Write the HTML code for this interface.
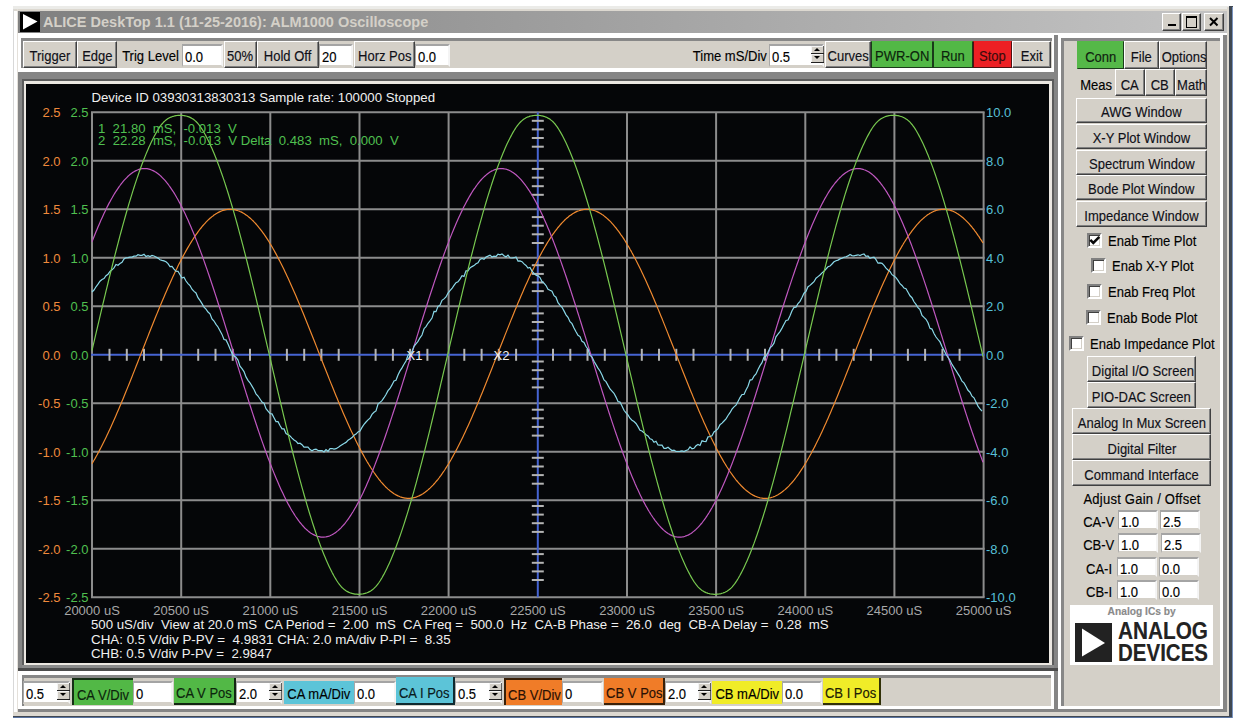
<!DOCTYPE html><html><head><meta charset="utf-8"><style>
html,body{margin:0;padding:0;}
body{width:1245px;height:727px;overflow:hidden;background:#fff;position:relative;font-family:"Liberation Sans",sans-serif;}
div{position:absolute;box-sizing:content-box;}
.rb{border:1px solid;border-color:#fff #404040 #404040 #fff;box-shadow:inset -1px -1px #808080;text-align:center;white-space:pre;overflow:hidden;}
.sl{border:1px solid;border-color:#808080 #fff #fff #808080;box-shadow:inset 1px 1px #404040;text-align:center;white-space:pre;overflow:hidden;}
.fl{white-space:pre;overflow:visible;}
.t{display:inline-block;transform:scaleX(0.93);-webkit-text-stroke:0.15px currentColor;}
.en{background:#fff;border:2px solid;border-color:#a4a4a4 #f4f4f4 #d4d0c8 #a8a8a8;border-left-width:1px;padding:0;text-indent:1px;white-space:pre;overflow:hidden;color:#000;}
.sp{background:#d4d0c8;border:0;box-shadow:inset 0 -1px #202020, inset -1px 0 #606060, inset 1px 1px #f4f4f4;}
.sp i{position:absolute;left:3px;width:0;height:0;border-left:3.5px solid transparent;border-right:3.5px solid transparent;}
.sp i.up{top:2px;border-bottom:3.5px solid #000;}
.sp i.dn{top:2px;border-top:3.5px solid #000;}
.cb{width:11px;height:11px;background:#fff;border:2px solid;border-color:#808080 #fff #fff #808080;box-shadow:inset 1px 1px #404040, inset -1px -1px #d4d0c8;}
</style></head><body>

<div style="left:13px;top:6px;width:1219.5px;height:712px;background:#fff;"></div>
<div style="left:13px;top:6px;width:1px;height:710px;background:#d8d8d8;"></div>
<div style="left:13px;top:6px;width:1216px;height:2.5px;background:#ebebe8;"></div>
<div style="left:14px;top:8.5px;width:1213px;height:2.5px;background:#dcd8d0;"></div>
<div style="left:17px;top:8.5px;width:1px;height:703.5px;background:#e4e0da;"></div>
<div style="left:1227px;top:7px;width:2px;height:709px;background:#dcd8d0;"></div>
<div style="left:13px;top:712px;width:1216px;height:3.5px;background:#dcd8d0;"></div>
<div style="left:1229px;top:6px;width:3.5px;height:712px;background:#404852;"></div>
<div style="left:13px;top:715.5px;width:1219.5px;height:2.5px;background:#404852;"></div>
<div style="left:13px;top:717px;width:1219.5px;height:1px;background:#5a74a0;"></div>
<div style="left:1232px;top:7px;width:1px;height:711px;background:#7a94c0;"></div>
<div style="left:18px;top:11px;width:1209px;height:22px;background:linear-gradient(to right,#808080,#c4c4c4);"></div>
<div style="left:20px;top:12px;width:20px;height:20px;background:#000;"></div>
<svg style="position:absolute;left:20px;top:12px" width="20" height="20" viewBox="0 0 20 20"><path d="M3 2 L17.5 9.5 L3 17.5 Z" fill="#fff"/></svg>
<div style="left:43px;top:12px;height:20px;line-height:20px;font-size:14.5px;font-weight:bold;color:#d4d0c8;white-space:pre">ALICE DeskTop 1.1 (11-25-2016): ALM1000 Oscilloscope</div>
<div class="rb" style="left:1162px;top:13px;width:17px;height:16px;line-height:20px;background:#d4d0c8;font-size:14px;color:#101018;"><span class="t" style=""></span></div>
<div class="rb" style="left:1182px;top:13px;width:17px;height:16px;line-height:20px;background:#d4d0c8;font-size:14px;color:#101018;"><span class="t" style=""></span></div>
<div class="rb" style="left:1204px;top:13px;width:18px;height:16px;line-height:20px;background:#d4d0c8;font-size:14px;color:#101018;"><span class="t" style=""></span></div>
<div style="left:1168px;top:24px;width:8px;height:2px;background:#000"></div>
<div style="left:1186px;top:16px;width:9px;height:8.5px;border:1px solid #000;border-top-width:2px"></div>
<svg style="position:absolute;left:1204px;top:13px" width="20" height="18" viewBox="0 0 20 18"><path d="M6 5 L13.5 12.5 M13.5 5 L6 12.5" stroke="#000" stroke-width="2" fill="none"/></svg>
<div style="left:21.4px;top:38px;width:1030.6px;height:30.400000000000006px;background:#878787;"></div>
<div style="left:24px;top:40.7px;width:1028px;height:27.700000000000003px;background:#d4d0c8;"></div>
<div style="left:1054.2px;top:34.5px;width:3.599999999999909px;height:677.5px;background:#858585;"></div>
<div class="rb" style="left:23px;top:41px;width:52px;height:25px;line-height:29px;background:#d4d0c8;font-size:14px;color:#101018;"><span class="t" style="">Trigger</span></div>
<div class="rb" style="left:77px;top:41px;width:38px;height:25px;line-height:29px;background:#d4d0c8;font-size:14px;color:#101018;"><span class="t" style="">Edge</span></div>
<div class="fl" style="left:119px;top:41px;width:62px;height:27px;line-height:31px;background:transparent;font-size:14px;color:#000;text-align:center;"><span class="t" style="transform-origin:50% 50%">Trig Level</span></div>
<div class="en" style="left:182px;top:44px;width:38px;height:19px;line-height:23px;font-size:14px;"><span class="t" style="transform-origin:0 50%">0.0</span></div>
<div class="rb" style="left:224px;top:41px;width:31px;height:25px;line-height:29px;background:#d4d0c8;font-size:14px;color:#101018;"><span class="t" style="">50%</span></div>
<div class="rb" style="left:257px;top:41px;width:60px;height:25px;line-height:29px;background:#d4d0c8;font-size:14px;color:#101018;"><span class="t" style="">Hold Off</span></div>
<div class="en" style="left:319px;top:44px;width:31px;height:19px;line-height:23px;font-size:14px;"><span class="t" style="transform-origin:0 50%">20</span></div>
<div class="rb" style="left:354px;top:41px;width:59px;height:25px;line-height:29px;background:#d4d0c8;font-size:14px;color:#101018;"><span class="t" style="">Horz Pos</span></div>
<div class="en" style="left:415px;top:44px;width:32px;height:19px;line-height:23px;font-size:14px;"><span class="t" style="transform-origin:0 50%">0.0</span></div>
<div class="fl" style="left:690px;top:41px;width:77px;height:27px;line-height:31px;background:transparent;font-size:14px;color:#000;text-align:center;"><span class="t" style="transform-origin:50% 50%">Time mS/Div</span></div>
<div class="en" style="left:769px;top:44px;width:52px;height:19px;line-height:23px;font-size:14px;"><span class="t" style="transform-origin:0 50%">0.5</span></div>
<div class="sp" style="left:811px;top:46px;width:13px;height:8px"><i class="up"></i></div>
<div class="sp" style="left:811px;top:54px;width:13px;height:8.5px"><i class="dn"></i></div>
<div class="rb" style="left:825px;top:41px;width:44px;height:25px;line-height:29px;background:#d4d0c8;font-size:14px;color:#101018;"><span class="t" style="">Curves</span></div>
<div class="rb" style="left:871px;top:41px;width:60px;height:25px;line-height:29px;background:#52b846;font-size:14px;color:#101018;border-color:#52b846 #1a3a1a #1a3a1a #1a3a1a;box-shadow:none;color:#0c240c"><span class="t" style="">PWR-ON</span></div>
<div class="rb" style="left:933px;top:41px;width:38px;height:25px;line-height:29px;background:#52b846;font-size:14px;color:#101018;border-color:#52b846 #1a3a1a #1a3a1a #1a3a1a;box-shadow:none;color:#0c240c"><span class="t" style="">Run</span></div>
<div class="rb" style="left:973px;top:41px;width:37px;height:25px;line-height:29px;background:#ec2024;font-size:14px;color:#101018;border-color:#ec2024 #501010 #501010 #501010;box-shadow:none;color:#3a0c0c"><span class="t" style="">Stop</span></div>
<div class="rb" style="left:1012px;top:41px;width:37px;height:25px;line-height:29px;background:#d4d0c8;font-size:14px;color:#101018;"><span class="t" style="">Exit</span></div>
<div style="left:17.5px;top:71.5px;width:1040.3px;height:599.5px;background:#858585;"></div>
<div style="left:21.5px;top:79px;width:1032.7px;height:588.5px;background:#5c5c5c;"></div>
<div style="left:24px;top:81px;width:1027.5px;height:584px;background:#ece8e2;"></div>
<div style="left:21.5px;top:665px;width:1032.7px;height:2.5px;background:#8c8c8c;"></div>
<div style="left:17.5px;top:667.5px;width:1040.3px;height:3.5px;background:#4c4c4c;"></div>
<div style="left:26px;top:84px;width:1022.8px;height:578.6px;background:#050608;"></div>
<div style="left:21.6px;top:675px;width:1029.4px;height:31px;background:#878787;"></div>
<div style="left:24px;top:677.5px;width:1027px;height:28.5px;background:#d4d0c8;"></div>
<div style="left:17.5px;top:709px;width:1040.3px;height:3px;background:#858585;"></div>
<div class="en" style="left:23px;top:681px;width:44px;height:19px;line-height:23px;font-size:14px;"><span class="t" style="transform-origin:0 50%">0.5</span></div>
<div class="sp" style="left:57px;top:683px;width:13px;height:8px"><i class="up"></i></div>
<div class="sp" style="left:57px;top:691px;width:13px;height:8.5px"><i class="dn"></i></div>
<div class="sl" style="left:72px;top:678px;width:59px;height:25px;line-height:29px;background:#52b846;font-size:14px;color:#000;border-width:2px 0 0 2px;border-color:#163016 #52b846 #52b846 #163016;box-shadow:none;width:59px;height:25px;line-height:31px;color:#0c240c"><span class="t">CA V/Div</span></div>
<div class="en" style="left:133px;top:681px;width:37px;height:19px;line-height:23px;font-size:14px;"><span class="t" style="transform-origin:0 50%">0</span></div>
<div class="rb" style="left:174px;top:678px;width:60px;height:25px;line-height:29px;background:#52b846;font-size:14px;color:#101018;border-width:0 2px 2px 0;border-color:#52b846 #122612 #122612 #52b846;box-shadow:none;width:60px;height:25px;line-height:31px;color:#0c240c"><span class="t" style="">CA V Pos</span></div>
<div class="en" style="left:236px;top:681px;width:43px;height:19px;line-height:23px;font-size:14px;"><span class="t" style="transform-origin:0 50%">2.0</span></div>
<div class="sp" style="left:269px;top:683px;width:13px;height:8px"><i class="up"></i></div>
<div class="sp" style="left:269px;top:691px;width:13px;height:8.5px"><i class="dn"></i></div>
<div class="fl" style="left:284px;top:681px;width:70px;height:23px;line-height:27px;background:#5cc4d8;font-size:14px;color:#000;text-align:center;"><span class="t" style="transform-origin:50% 50%">CA mA/Div</span></div>
<div class="en" style="left:354px;top:681px;width:39px;height:19px;line-height:23px;font-size:14px;"><span class="t" style="transform-origin:0 50%">0.0</span></div>
<div class="rb" style="left:396px;top:677px;width:57px;height:26px;line-height:30px;background:#5cc4d8;font-size:14px;color:#101018;border-width:0 2px 2px 0;border-color:#5cc4d8 #102a30 #102a30 #5cc4d8;box-shadow:none;width:57px;height:26px;line-height:32px;color:#0a1a20"><span class="t" style="">CA I Pos</span></div>
<div class="en" style="left:455px;top:681px;width:44px;height:19px;line-height:23px;font-size:14px;"><span class="t" style="transform-origin:0 50%">0.5</span></div>
<div class="sp" style="left:489px;top:683px;width:13px;height:8px"><i class="up"></i></div>
<div class="sp" style="left:489px;top:691px;width:13px;height:8.5px"><i class="dn"></i></div>
<div class="sl" style="left:504px;top:678px;width:56px;height:25px;line-height:29px;background:#f07c28;font-size:14px;color:#000;border-width:2px 0 0 2px;border-color:#3a2008 #f07c28 #f07c28 #3a2008;box-shadow:none;width:56px;height:25px;line-height:31px;color:#2a1004"><span class="t">CB V/Div</span></div>
<div class="en" style="left:562px;top:681px;width:38px;height:19px;line-height:23px;font-size:14px;"><span class="t" style="transform-origin:0 50%">0</span></div>
<div class="rb" style="left:604px;top:678px;width:59px;height:25px;line-height:29px;background:#f07c28;font-size:14px;color:#101018;border-width:0 2px 2px 0;border-color:#f07c28 #3a2008 #3a2008 #f07c28;box-shadow:none;width:59px;height:25px;line-height:31px;color:#2a1004"><span class="t" style="">CB V Pos</span></div>
<div class="en" style="left:665px;top:681px;width:43px;height:19px;line-height:23px;font-size:14px;"><span class="t" style="transform-origin:0 50%">2.0</span></div>
<div class="sp" style="left:698px;top:683px;width:13px;height:8px"><i class="up"></i></div>
<div class="sp" style="left:698px;top:691px;width:13px;height:8.5px"><i class="dn"></i></div>
<div class="fl" style="left:712px;top:681px;width:70px;height:23px;line-height:27px;background:#f0ec28;font-size:14px;color:#000;text-align:center;"><span class="t" style="transform-origin:50% 50%">CB mA/Div</span></div>
<div class="en" style="left:782px;top:681px;width:37px;height:19px;line-height:23px;font-size:14px;"><span class="t" style="transform-origin:0 50%">0.0</span></div>
<div class="rb" style="left:823px;top:678px;width:56px;height:25px;line-height:29px;background:#f0ec28;font-size:14px;color:#101018;border-width:0 2px 2px 0;border-color:#f0ec28 #303008 #303008 #f0ec28;box-shadow:none;width:56px;height:25px;line-height:31px;color:#202004"><span class="t" style="">CB I Pos</span></div>
<div style="left:1061.3px;top:38px;width:158.60000000000014px;height:667.5px;background:#878787;"></div>
<div style="left:1063.7px;top:40.5px;width:156.20000000000005px;height:665.0px;background:#d4d0c8;"></div>
<div style="left:1223px;top:34.5px;width:4px;height:677.5px;background:#858585;"></div>
<div style="left:1057.8px;top:709px;width:169.20000000000005px;height:3px;background:#858585;"></div>
<div class="rb" style="left:1077px;top:41px;width:45px;height:26px;line-height:30px;background:#55b848;font-size:14px;color:#101018;border-color:#55b848 #1c3c1c #1c3c1c #55b848;box-shadow:none;color:#102010"><span class="t" style="">Conn</span></div>
<div class="rb" style="left:1124px;top:41px;width:33px;height:26px;line-height:30px;background:#d4d0c8;font-size:14px;color:#101018;"><span class="t" style="">File</span></div>
<div class="rb" style="left:1159px;top:41px;width:46px;height:26px;line-height:30px;background:#d4d0c8;font-size:14px;color:#101018;"><span class="t" style="">Options</span></div>
<div class="fl" style="left:1078px;top:70px;width:36px;height:27px;line-height:31px;background:transparent;font-size:14px;color:#000;text-align:center;"><span class="t" style="transform-origin:50% 50%">Meas</span></div>
<div class="rb" style="left:1115px;top:69px;width:28px;height:25px;line-height:29px;background:#d4d0c8;font-size:14px;color:#101018;"><span class="t" style="position:relative;top:1px">CA</span></div>
<div class="rb" style="left:1145px;top:69px;width:28px;height:25px;line-height:29px;background:#d4d0c8;font-size:14px;color:#101018;"><span class="t" style="position:relative;top:1px">CB</span></div>
<div class="rb" style="left:1175px;top:69px;width:30px;height:25px;line-height:29px;background:#d4d0c8;font-size:14px;color:#101018;"><span class="t" style="position:relative;top:1px">Math</span></div>
<div class="rb" style="left:1076px;top:98px;width:129px;height:23px;line-height:27px;background:#d4d0c8;font-size:14px;color:#101018;"><span class="t" style="">AWG Window</span></div>
<div class="rb" style="left:1076px;top:124px;width:129px;height:23px;line-height:27px;background:#d4d0c8;font-size:14px;color:#101018;"><span class="t" style="">X-Y Plot Window</span></div>
<div class="rb" style="left:1076px;top:150px;width:129px;height:23px;line-height:27px;background:#d4d0c8;font-size:14px;color:#101018;"><span class="t" style="">Spectrum Window</span></div>
<div class="rb" style="left:1076px;top:175px;width:129px;height:23px;line-height:27px;background:#d4d0c8;font-size:14px;color:#101018;"><span class="t" style="">Bode Plot Window</span></div>
<div class="rb" style="left:1076px;top:201px;width:129px;height:24px;line-height:28px;background:#d4d0c8;font-size:14px;color:#101018;"><span class="t" style="">Impedance Window</span></div>
<div class="cb" style="left:1087px;top:233px"></div>
<svg style="position:absolute;left:1087px;top:233px" width="16" height="16" viewBox="0 0 16 16"><path d="M3.3 6.8 L6.3 9.8 L12.3 3.8" stroke="#080808" stroke-width="2.6" fill="none"/></svg>
<div class="fl" style="left:1108px;top:230px;height:20px;line-height:22px;font-size:14px;color:#000;white-space:pre"><span class="t" style="transform-origin:0 50%">Enab Time Plot</span></div>
<div class="cb" style="left:1091px;top:258px"></div>
<div class="fl" style="left:1112px;top:255px;height:20px;line-height:22px;font-size:14px;color:#000;white-space:pre"><span class="t" style="transform-origin:0 50%">Enab X-Y Plot</span></div>
<div class="cb" style="left:1087px;top:284px"></div>
<div class="fl" style="left:1108px;top:281px;height:20px;line-height:22px;font-size:14px;color:#000;white-space:pre"><span class="t" style="transform-origin:0 50%">Enab Freq Plot</span></div>
<div class="cb" style="left:1086px;top:310px"></div>
<div class="fl" style="left:1107px;top:307px;height:20px;line-height:22px;font-size:14px;color:#000;white-space:pre"><span class="t" style="transform-origin:0 50%">Enab Bode Plot</span></div>
<div class="cb" style="left:1069px;top:336px"></div>
<div class="fl" style="left:1090px;top:333px;height:20px;line-height:22px;font-size:14px;color:#000;white-space:pre"><span class="t" style="transform-origin:0 50%">Enab Impedance Plot</span></div>
<div class="rb" style="left:1087px;top:356px;width:107px;height:24px;line-height:28px;background:#d4d0c8;font-size:14px;color:#101018;"><span class="t" style="">Digital I/O Screen</span></div>
<div class="rb" style="left:1087px;top:382px;width:107px;height:24px;line-height:28px;background:#d4d0c8;font-size:14px;color:#101018;"><span class="t" style="">PIO-DAC Screen</span></div>
<div class="rb" style="left:1072px;top:408px;width:137px;height:24px;line-height:28px;background:#d4d0c8;font-size:14px;color:#101018;"><span class="t" style="">Analog In Mux Screen</span></div>
<div class="rb" style="left:1072px;top:434px;width:137px;height:24px;line-height:28px;background:#d4d0c8;font-size:14px;color:#101018;"><span class="t" style="">Digital Filter</span></div>
<div class="rb" style="left:1072px;top:460px;width:137px;height:24px;line-height:28px;background:#d4d0c8;font-size:14px;color:#101018;"><span class="t" style="">Command Interface</span></div>
<div class="fl" style="left:1064px;top:487px;width:156px;height:21px;line-height:25px;background:transparent;font-size:14px;color:#000;text-align:center;letter-spacing:0.25px"><span class="t" style="transform-origin:50% 50%">Adjust Gain / Offset</span></div>
<div class="fl" style="left:1080px;top:510px;width:37px;height:20px;line-height:24px;background:transparent;font-size:14px;color:#000;text-align:center;"><span class="t" style="transform-origin:50% 50%">CA-V</span></div>
<div class="en" style="left:1118px;top:510px;width:37px;height:16px;line-height:20px;font-size:14px;"><span class="t" style="transform-origin:0 50%">1.0</span></div>
<div class="en" style="left:1160px;top:510px;width:37px;height:16px;line-height:20px;font-size:14px;"><span class="t" style="transform-origin:0 50%">2.5</span></div>
<div class="fl" style="left:1080px;top:533px;width:37px;height:20px;line-height:24px;background:transparent;font-size:14px;color:#000;text-align:center;"><span class="t" style="transform-origin:50% 50%">CB-V</span></div>
<div class="en" style="left:1118px;top:533px;width:37px;height:16px;line-height:20px;font-size:14px;"><span class="t" style="transform-origin:0 50%">1.0</span></div>
<div class="en" style="left:1161px;top:533px;width:37px;height:16px;line-height:20px;font-size:14px;"><span class="t" style="transform-origin:0 50%">2.5</span></div>
<div class="fl" style="left:1080px;top:557px;width:37px;height:20px;line-height:24px;background:transparent;font-size:14px;color:#000;text-align:center;"><span class="t" style="transform-origin:50% 50%">CA-I</span></div>
<div class="en" style="left:1117px;top:557px;width:37px;height:16px;line-height:20px;font-size:14px;"><span class="t" style="transform-origin:0 50%">1.0</span></div>
<div class="en" style="left:1159px;top:557px;width:37px;height:16px;line-height:20px;font-size:14px;"><span class="t" style="transform-origin:0 50%">0.0</span></div>
<div class="fl" style="left:1080px;top:580px;width:37px;height:20px;line-height:24px;background:transparent;font-size:14px;color:#000;text-align:center;"><span class="t" style="transform-origin:50% 50%">CB-I</span></div>
<div class="en" style="left:1117px;top:580px;width:37px;height:16px;line-height:20px;font-size:14px;"><span class="t" style="transform-origin:0 50%">1.0</span></div>
<div class="en" style="left:1159px;top:580px;width:37px;height:16px;line-height:20px;font-size:14px;"><span class="t" style="transform-origin:0 50%">0.0</span></div>
<div style="left:1070px;top:605px;width:143px;height:60px;background:#fff;"></div>
<div style="left:1070px;top:604px;width:143px;height:14px;line-height:14px;font-size:11px;font-weight:bold;color:#8a8a8a;text-align:center"><span class="t" style="transform:scaleX(0.93)">Analog ICs by</span></div>
<div style="left:1075px;top:623px;width:37px;height:39px;background:#222;"></div>
<svg style="position:absolute;left:1075px;top:623px" width="37" height="39" viewBox="0 0 37 39"><path d="M7 5.5 L30 20 L7 33.5 Z" fill="#fff"/></svg>
<div style="left:1118px;top:620px;width:96px;height:22px;line-height:22px;font-size:24px;font-weight:bold;color:#222;white-space:pre"><span class="t" style="transform:scaleX(0.865);transform-origin:0 50%">ANALOG</span></div>
<div style="left:1118px;top:642px;width:96px;height:22px;line-height:22px;font-size:24px;font-weight:bold;color:#222;white-space:pre"><span class="t" style="transform:scaleX(0.854);transform-origin:0 50%">DEVICES</span></div>
<svg style="position:absolute;left:0;top:0" width="1245" height="727" viewBox="0 0 1245 727">
<line x1="92.0" y1="112.3" x2="92.0" y2="597.3" stroke="#8c8c8c" stroke-width="2"/>
<line x1="181.2" y1="112.3" x2="181.2" y2="597.3" stroke="#8c8c8c" stroke-width="2"/>
<line x1="270.3" y1="112.3" x2="270.3" y2="597.3" stroke="#8c8c8c" stroke-width="2"/>
<line x1="359.5" y1="112.3" x2="359.5" y2="597.3" stroke="#8c8c8c" stroke-width="2"/>
<line x1="448.6" y1="112.3" x2="448.6" y2="597.3" stroke="#8c8c8c" stroke-width="2"/>
<line x1="627.0" y1="112.3" x2="627.0" y2="597.3" stroke="#8c8c8c" stroke-width="2"/>
<line x1="716.1" y1="112.3" x2="716.1" y2="597.3" stroke="#8c8c8c" stroke-width="2"/>
<line x1="805.3" y1="112.3" x2="805.3" y2="597.3" stroke="#8c8c8c" stroke-width="2"/>
<line x1="894.4" y1="112.3" x2="894.4" y2="597.3" stroke="#8c8c8c" stroke-width="2"/>
<line x1="983.6" y1="112.3" x2="983.6" y2="597.3" stroke="#8c8c8c" stroke-width="2"/>
<line x1="91.0" y1="112.3" x2="984.6" y2="112.3" stroke="#8c8c8c" stroke-width="2"/>
<line x1="91.0" y1="160.8" x2="984.6" y2="160.8" stroke="#8c8c8c" stroke-width="2"/>
<line x1="91.0" y1="209.3" x2="984.6" y2="209.3" stroke="#8c8c8c" stroke-width="2"/>
<line x1="91.0" y1="257.8" x2="984.6" y2="257.8" stroke="#8c8c8c" stroke-width="2"/>
<line x1="91.0" y1="306.3" x2="984.6" y2="306.3" stroke="#8c8c8c" stroke-width="2"/>
<line x1="91.0" y1="403.3" x2="984.6" y2="403.3" stroke="#8c8c8c" stroke-width="2"/>
<line x1="91.0" y1="451.8" x2="984.6" y2="451.8" stroke="#8c8c8c" stroke-width="2"/>
<line x1="91.0" y1="500.3" x2="984.6" y2="500.3" stroke="#8c8c8c" stroke-width="2"/>
<line x1="91.0" y1="548.8" x2="984.6" y2="548.8" stroke="#8c8c8c" stroke-width="2"/>
<line x1="91.0" y1="597.3" x2="984.6" y2="597.3" stroke="#8c8c8c" stroke-width="2"/>
<line x1="91.0" y1="354.8" x2="984.6" y2="354.8" stroke="#4664d2" stroke-width="2"/>
<line x1="537.8" y1="112.3" x2="537.8" y2="597.3" stroke="#4664d2" stroke-width="2"/>
<line x1="109.5" y1="348.8" x2="109.5" y2="360.8" stroke="#b4b4b4" stroke-width="2"/>
<line x1="126.8" y1="348.8" x2="126.8" y2="360.8" stroke="#b4b4b4" stroke-width="2"/>
<line x1="144.0" y1="348.8" x2="144.0" y2="360.8" stroke="#b4b4b4" stroke-width="2"/>
<line x1="161.2" y1="348.8" x2="161.2" y2="360.8" stroke="#b4b4b4" stroke-width="2"/>
<line x1="198.2" y1="348.8" x2="198.2" y2="360.8" stroke="#b4b4b4" stroke-width="2"/>
<line x1="215.5" y1="348.8" x2="215.5" y2="360.8" stroke="#b4b4b4" stroke-width="2"/>
<line x1="232.7" y1="348.8" x2="232.7" y2="360.8" stroke="#b4b4b4" stroke-width="2"/>
<line x1="250.0" y1="348.8" x2="250.0" y2="360.8" stroke="#b4b4b4" stroke-width="2"/>
<line x1="286.9" y1="348.8" x2="286.9" y2="360.8" stroke="#b4b4b4" stroke-width="2"/>
<line x1="304.2" y1="348.8" x2="304.2" y2="360.8" stroke="#b4b4b4" stroke-width="2"/>
<line x1="321.4" y1="348.8" x2="321.4" y2="360.8" stroke="#b4b4b4" stroke-width="2"/>
<line x1="338.7" y1="348.8" x2="338.7" y2="360.8" stroke="#b4b4b4" stroke-width="2"/>
<line x1="375.6" y1="348.8" x2="375.6" y2="360.8" stroke="#b4b4b4" stroke-width="2"/>
<line x1="392.9" y1="348.8" x2="392.9" y2="360.8" stroke="#b4b4b4" stroke-width="2"/>
<line x1="410.1" y1="348.8" x2="410.1" y2="360.8" stroke="#b4b4b4" stroke-width="2"/>
<line x1="427.4" y1="348.8" x2="427.4" y2="360.8" stroke="#b4b4b4" stroke-width="2"/>
<line x1="464.3" y1="348.8" x2="464.3" y2="360.8" stroke="#b4b4b4" stroke-width="2"/>
<line x1="481.6" y1="348.8" x2="481.6" y2="360.8" stroke="#b4b4b4" stroke-width="2"/>
<line x1="498.8" y1="348.8" x2="498.8" y2="360.8" stroke="#b4b4b4" stroke-width="2"/>
<line x1="516.1" y1="348.8" x2="516.1" y2="360.8" stroke="#b4b4b4" stroke-width="2"/>
<line x1="553.0" y1="348.8" x2="553.0" y2="360.8" stroke="#b4b4b4" stroke-width="2"/>
<line x1="570.3" y1="348.8" x2="570.3" y2="360.8" stroke="#b4b4b4" stroke-width="2"/>
<line x1="587.5" y1="348.8" x2="587.5" y2="360.8" stroke="#b4b4b4" stroke-width="2"/>
<line x1="604.8" y1="348.8" x2="604.8" y2="360.8" stroke="#b4b4b4" stroke-width="2"/>
<line x1="641.8" y1="348.8" x2="641.8" y2="360.8" stroke="#b4b4b4" stroke-width="2"/>
<line x1="659.0" y1="348.8" x2="659.0" y2="360.8" stroke="#b4b4b4" stroke-width="2"/>
<line x1="676.3" y1="348.8" x2="676.3" y2="360.8" stroke="#b4b4b4" stroke-width="2"/>
<line x1="693.5" y1="348.8" x2="693.5" y2="360.8" stroke="#b4b4b4" stroke-width="2"/>
<line x1="730.5" y1="348.8" x2="730.5" y2="360.8" stroke="#b4b4b4" stroke-width="2"/>
<line x1="747.7" y1="348.8" x2="747.7" y2="360.8" stroke="#b4b4b4" stroke-width="2"/>
<line x1="765.0" y1="348.8" x2="765.0" y2="360.8" stroke="#b4b4b4" stroke-width="2"/>
<line x1="782.2" y1="348.8" x2="782.2" y2="360.8" stroke="#b4b4b4" stroke-width="2"/>
<line x1="819.2" y1="348.8" x2="819.2" y2="360.8" stroke="#b4b4b4" stroke-width="2"/>
<line x1="836.4" y1="348.8" x2="836.4" y2="360.8" stroke="#b4b4b4" stroke-width="2"/>
<line x1="853.7" y1="348.8" x2="853.7" y2="360.8" stroke="#b4b4b4" stroke-width="2"/>
<line x1="870.9" y1="348.8" x2="870.9" y2="360.8" stroke="#b4b4b4" stroke-width="2"/>
<line x1="907.9" y1="348.8" x2="907.9" y2="360.8" stroke="#b4b4b4" stroke-width="2"/>
<line x1="925.1" y1="348.8" x2="925.1" y2="360.8" stroke="#b4b4b4" stroke-width="2"/>
<line x1="942.4" y1="348.8" x2="942.4" y2="360.8" stroke="#b4b4b4" stroke-width="2"/>
<line x1="959.6" y1="348.8" x2="959.6" y2="360.8" stroke="#b4b4b4" stroke-width="2"/>
<line x1="531.8" y1="120.8" x2="543.8" y2="120.8" stroke="#b4b4b4" stroke-width="2"/>
<line x1="531.8" y1="129.4" x2="543.8" y2="129.4" stroke="#b4b4b4" stroke-width="2"/>
<line x1="531.8" y1="138.0" x2="543.8" y2="138.0" stroke="#b4b4b4" stroke-width="2"/>
<line x1="531.8" y1="146.7" x2="543.8" y2="146.7" stroke="#b4b4b4" stroke-width="2"/>
<line x1="531.8" y1="168.9" x2="543.8" y2="168.9" stroke="#b4b4b4" stroke-width="2"/>
<line x1="531.8" y1="177.6" x2="543.8" y2="177.6" stroke="#b4b4b4" stroke-width="2"/>
<line x1="531.8" y1="186.2" x2="543.8" y2="186.2" stroke="#b4b4b4" stroke-width="2"/>
<line x1="531.8" y1="194.8" x2="543.8" y2="194.8" stroke="#b4b4b4" stroke-width="2"/>
<line x1="531.8" y1="217.1" x2="543.8" y2="217.1" stroke="#b4b4b4" stroke-width="2"/>
<line x1="531.8" y1="225.7" x2="543.8" y2="225.7" stroke="#b4b4b4" stroke-width="2"/>
<line x1="531.8" y1="234.3" x2="543.8" y2="234.3" stroke="#b4b4b4" stroke-width="2"/>
<line x1="531.8" y1="243.0" x2="543.8" y2="243.0" stroke="#b4b4b4" stroke-width="2"/>
<line x1="531.8" y1="265.2" x2="543.8" y2="265.2" stroke="#b4b4b4" stroke-width="2"/>
<line x1="531.8" y1="273.9" x2="543.8" y2="273.9" stroke="#b4b4b4" stroke-width="2"/>
<line x1="531.8" y1="282.5" x2="543.8" y2="282.5" stroke="#b4b4b4" stroke-width="2"/>
<line x1="531.8" y1="291.1" x2="543.8" y2="291.1" stroke="#b4b4b4" stroke-width="2"/>
<line x1="531.8" y1="313.4" x2="543.8" y2="313.4" stroke="#b4b4b4" stroke-width="2"/>
<line x1="531.8" y1="322.0" x2="543.8" y2="322.0" stroke="#b4b4b4" stroke-width="2"/>
<line x1="531.8" y1="330.6" x2="543.8" y2="330.6" stroke="#b4b4b4" stroke-width="2"/>
<line x1="531.8" y1="339.3" x2="543.8" y2="339.3" stroke="#b4b4b4" stroke-width="2"/>
<line x1="531.8" y1="361.5" x2="543.8" y2="361.5" stroke="#b4b4b4" stroke-width="2"/>
<line x1="531.8" y1="370.2" x2="543.8" y2="370.2" stroke="#b4b4b4" stroke-width="2"/>
<line x1="531.8" y1="378.8" x2="543.8" y2="378.8" stroke="#b4b4b4" stroke-width="2"/>
<line x1="531.8" y1="387.4" x2="543.8" y2="387.4" stroke="#b4b4b4" stroke-width="2"/>
<line x1="531.8" y1="409.7" x2="543.8" y2="409.7" stroke="#b4b4b4" stroke-width="2"/>
<line x1="531.8" y1="418.3" x2="543.8" y2="418.3" stroke="#b4b4b4" stroke-width="2"/>
<line x1="531.8" y1="426.9" x2="543.8" y2="426.9" stroke="#b4b4b4" stroke-width="2"/>
<line x1="531.8" y1="435.6" x2="543.8" y2="435.6" stroke="#b4b4b4" stroke-width="2"/>
<line x1="531.8" y1="457.8" x2="543.8" y2="457.8" stroke="#b4b4b4" stroke-width="2"/>
<line x1="531.8" y1="466.5" x2="543.8" y2="466.5" stroke="#b4b4b4" stroke-width="2"/>
<line x1="531.8" y1="475.1" x2="543.8" y2="475.1" stroke="#b4b4b4" stroke-width="2"/>
<line x1="531.8" y1="483.7" x2="543.8" y2="483.7" stroke="#b4b4b4" stroke-width="2"/>
<line x1="531.8" y1="506.0" x2="543.8" y2="506.0" stroke="#b4b4b4" stroke-width="2"/>
<line x1="531.8" y1="514.6" x2="543.8" y2="514.6" stroke="#b4b4b4" stroke-width="2"/>
<line x1="531.8" y1="523.2" x2="543.8" y2="523.2" stroke="#b4b4b4" stroke-width="2"/>
<line x1="531.8" y1="531.9" x2="543.8" y2="531.9" stroke="#b4b4b4" stroke-width="2"/>
<line x1="531.8" y1="554.1" x2="543.8" y2="554.1" stroke="#b4b4b4" stroke-width="2"/>
<line x1="531.8" y1="562.8" x2="543.8" y2="562.8" stroke="#b4b4b4" stroke-width="2"/>
<line x1="531.8" y1="571.4" x2="543.8" y2="571.4" stroke="#b4b4b4" stroke-width="2"/>
<line x1="531.8" y1="580.0" x2="543.8" y2="580.0" stroke="#b4b4b4" stroke-width="2"/>
<polyline points="92.0,463.7 93.0,462.0 94.0,460.3 95.0,458.6 96.0,456.8 97.0,455.0 98.0,453.1 99.0,451.3 100.0,449.4 101.0,447.5 102.0,445.5 103.0,443.5 104.0,441.5 105.0,439.5 106.0,437.4 107.0,435.3 108.0,433.2 109.0,431.1 110.0,428.9 111.0,426.7 112.0,424.5 113.0,422.3 114.0,420.0 115.0,417.7 116.0,415.4 117.0,413.1 118.0,410.8 119.0,408.5 120.0,406.1 121.0,403.7 122.0,401.3 123.0,398.9 124.0,396.5 125.0,394.0 126.0,391.6 127.0,389.1 128.0,386.6 129.0,384.2 130.0,381.7 131.0,379.2 132.0,376.7 133.0,374.1 134.0,371.6 135.0,369.1 136.0,366.5 137.0,364.0 138.0,361.5 139.0,358.9 140.0,356.4 141.0,353.8 142.0,351.3 143.0,348.7 144.0,346.2 145.0,343.7 146.0,341.1 147.0,338.6 148.0,336.1 149.0,333.5 150.0,331.0 151.0,328.5 152.0,326.0 153.0,323.5 154.0,321.0 155.0,318.5 156.0,316.1 157.0,313.6 158.0,311.2 159.0,308.8 160.0,306.3 161.0,304.0 162.0,301.6 163.0,299.2 164.0,296.9 165.0,294.5 166.0,292.2 167.0,289.9 168.0,287.6 169.0,285.4 170.0,283.2 171.0,280.9 172.0,278.8 173.0,276.6 174.0,274.5 175.0,272.3 176.0,270.3 177.0,268.2 178.0,266.1 179.0,264.1 180.0,262.2 181.0,260.2 182.0,258.3 183.0,256.4 184.0,254.5 185.0,252.7 186.0,250.9 187.0,249.1 188.0,247.4 189.0,245.7 190.0,244.0 191.0,242.4 192.0,240.8 193.0,239.2 194.0,237.6 195.0,236.2 196.0,234.7 197.0,233.3 198.0,231.9 199.0,230.5 200.0,229.2 201.0,228.0 202.0,226.7 203.0,225.5 204.0,224.4 205.0,223.3 206.0,222.2 207.0,221.2 208.0,220.2 209.0,219.2 210.0,218.3 211.0,217.5 212.0,216.6 213.0,215.9 214.0,215.1 215.0,214.4 216.0,213.8 217.0,213.2 218.0,212.6 219.0,212.1 220.0,211.6 221.0,211.2 222.0,210.8 223.0,210.4 224.0,210.2 225.0,209.9 226.0,209.7 227.0,209.5 228.0,209.4 229.0,209.3 230.0,209.3 231.0,209.3 232.0,209.4 233.0,209.5 234.0,209.6 235.0,209.8 236.0,210.1 237.0,210.3 238.0,210.7 239.0,211.0 240.0,211.5 241.0,211.9 242.0,212.4 243.0,213.0 244.0,213.6 245.0,214.2 246.0,214.9 247.0,215.6 248.0,216.4 249.0,217.2 250.0,218.0 251.0,218.9 252.0,219.9 253.0,220.8 254.0,221.9 255.0,222.9 256.0,224.0 257.0,225.2 258.0,226.3 259.0,227.6 260.0,228.8 261.0,230.1 262.0,231.4 263.0,232.8 264.0,234.2 265.0,235.7 266.0,237.2 267.0,238.7 268.0,240.2 269.0,241.8 270.0,243.5 271.0,245.1 272.0,246.8 273.0,248.5 274.0,250.3 275.0,252.1 276.0,253.9 277.0,255.8 278.0,257.7 279.0,259.6 280.0,261.5 281.0,263.5 282.0,265.5 283.0,267.5 284.0,269.6 285.0,271.7 286.0,273.8 287.0,275.9 288.0,278.1 289.0,280.2 290.0,282.4 291.0,284.7 292.0,286.9 293.0,289.2 294.0,291.5 295.0,293.8 296.0,296.1 297.0,298.5 298.0,300.8 299.0,303.2 300.0,305.6 301.0,308.0 302.0,310.4 303.0,312.8 304.0,315.3 305.0,317.8 306.0,320.2 307.0,322.7 308.0,325.2 309.0,327.7 310.0,330.2 311.0,332.7 312.0,335.2 313.0,337.8 314.0,340.3 315.0,342.8 316.0,345.4 317.0,347.9 318.0,350.5 319.0,353.0 320.0,355.6 321.0,358.1 322.0,360.7 323.0,363.2 324.0,365.7 325.0,368.3 326.0,370.8 327.0,373.3 328.0,375.8 329.0,378.4 330.0,380.9 331.0,383.4 332.0,385.8 333.0,388.3 334.0,390.8 335.0,393.2 336.0,395.7 337.0,398.1 338.0,400.5 339.0,402.9 340.0,405.3 341.0,407.7 342.0,410.1 343.0,412.4 344.0,414.7 345.0,417.0 346.0,419.3 347.0,421.6 348.0,423.8 349.0,426.0 350.0,428.2 351.0,430.4 352.0,432.5 353.0,434.6 354.0,436.7 355.0,438.8 356.0,440.9 357.0,442.9 358.0,444.9 359.0,446.8 360.0,448.8 361.0,450.7 362.0,452.6 363.0,454.4 364.0,456.2 365.0,458.0 366.0,459.7 367.0,461.5 368.0,463.1 369.0,464.8 370.0,466.4 371.0,468.0 372.0,469.5 373.0,471.0 374.0,472.5 375.0,473.9 376.0,475.3 377.0,476.7 378.0,478.0 379.0,479.3 380.0,480.5 381.0,481.8 382.0,482.9 383.0,484.0 384.0,485.1 385.0,486.2 386.0,487.2 387.0,488.1 388.0,489.1 389.0,489.9 390.0,490.8 391.0,491.6 392.0,492.3 393.0,493.0 394.0,493.7 395.0,494.3 396.0,494.9 397.0,495.4 398.0,495.9 399.0,496.3 400.0,496.8 401.0,497.1 402.0,497.4 403.0,497.7 404.0,497.9 405.0,498.1 406.0,498.2 407.0,498.3 408.0,498.4 409.0,498.4 410.0,498.3 411.0,498.2 412.0,498.1 413.0,497.9 414.0,497.7 415.0,497.4 416.0,497.1 417.0,496.7 418.0,496.3 419.0,495.9 420.0,495.4 421.0,494.9 422.0,494.3 423.0,493.7 424.0,493.0 425.0,492.3 426.0,491.5 427.0,490.7 428.0,489.9 429.0,489.0 430.0,488.1 431.0,487.1 432.0,486.1 433.0,485.1 434.0,484.0 435.0,482.9 436.0,481.7 437.0,480.5 438.0,479.3 439.0,478.0 440.0,476.6 441.0,475.3 442.0,473.9 443.0,472.4 444.0,471.0 445.0,469.5 446.0,467.9 447.0,466.3 448.0,464.7 449.0,463.1 450.0,461.4 451.0,459.7 452.0,457.9 453.0,456.1 454.0,454.3 455.0,452.5 456.0,450.6 457.0,448.7 458.0,446.8 459.0,444.8 460.0,442.8 461.0,440.8 462.0,438.7 463.0,436.7 464.0,434.6 465.0,432.4 466.0,430.3 467.0,428.1 468.0,425.9 469.0,423.7 470.0,421.5 471.0,419.2 472.0,416.9 473.0,414.6 474.0,412.3 475.0,410.0 476.0,407.6 477.0,405.2 478.0,402.8 479.0,400.4 480.0,398.0 481.0,395.6 482.0,393.2 483.0,390.7 484.0,388.2 485.0,385.7 486.0,383.3 487.0,380.8 488.0,378.3 489.0,375.7 490.0,373.2 491.0,370.7 492.0,368.2 493.0,365.6 494.0,363.1 495.0,360.5 496.0,358.0 497.0,355.5 498.0,352.9 499.0,350.4 500.0,347.8 501.0,345.3 502.0,342.7 503.0,340.2 504.0,337.7 505.0,335.1 506.0,332.6 507.0,330.1 508.0,327.6 509.0,325.1 510.0,322.6 511.0,320.1 512.0,317.7 513.0,315.2 514.0,312.7 515.0,310.3 516.0,307.9 517.0,305.5 518.0,303.1 519.0,300.7 520.0,298.4 521.0,296.0 522.0,293.7 523.0,291.4 524.0,289.1 525.0,286.8 526.0,284.6 527.0,282.4 528.0,280.2 529.0,278.0 530.0,275.8 531.0,273.7 532.0,271.6 533.0,269.5 534.0,267.5 535.0,265.4 536.0,263.4 537.0,261.4 538.0,259.5 539.0,257.6 540.0,255.7 541.0,253.9 542.0,252.0 543.0,250.2 544.0,248.5 545.0,246.8 546.0,245.1 547.0,243.4 548.0,241.8 549.0,240.2 550.0,238.6 551.0,237.1 552.0,235.6 553.0,234.2 554.0,232.8 555.0,231.4 556.0,230.1 557.0,228.8 558.0,227.5 559.0,226.3 560.0,225.1 561.0,224.0 562.0,222.9 563.0,221.8 564.0,220.8 565.0,219.8 566.0,218.9 567.0,218.0 568.0,217.2 569.0,216.3 570.0,215.6 571.0,214.9 572.0,214.2 573.0,213.6 574.0,213.0 575.0,212.4 576.0,211.9 577.0,211.4 578.0,211.0 579.0,210.7 580.0,210.3 581.0,210.1 582.0,209.8 583.0,209.6 584.0,209.5 585.0,209.4 586.0,209.3 587.0,209.3 588.0,209.3 589.0,209.4 590.0,209.5 591.0,209.7 592.0,209.9 593.0,210.2 594.0,210.5 595.0,210.8 596.0,211.2 597.0,211.6 598.0,212.1 599.0,212.6 600.0,213.2 601.0,213.8 602.0,214.5 603.0,215.1 604.0,215.9 605.0,216.7 606.0,217.5 607.0,218.4 608.0,219.3 609.0,220.2 610.0,221.2 611.0,222.2 612.0,223.3 613.0,224.4 614.0,225.6 615.0,226.8 616.0,228.0 617.0,229.3 618.0,230.6 619.0,231.9 620.0,233.3 621.0,234.8 622.0,236.2 623.0,237.7 624.0,239.2 625.0,240.8 626.0,242.4 627.0,244.1 628.0,245.7 629.0,247.4 630.0,249.2 631.0,250.9 632.0,252.8 633.0,254.6 634.0,256.5 635.0,258.4 636.0,260.3 637.0,262.2 638.0,264.2 639.0,266.2 640.0,268.3 641.0,270.3 642.0,272.4 643.0,274.5 644.0,276.7 645.0,278.8 646.0,281.0 647.0,283.2 648.0,285.5 649.0,287.7 650.0,290.0 651.0,292.3 652.0,294.6 653.0,296.9 654.0,299.3 655.0,301.7 656.0,304.0 657.0,306.4 658.0,308.9 659.0,311.3 660.0,313.7 661.0,316.2 662.0,318.6 663.0,321.1 664.0,323.6 665.0,326.1 666.0,328.6 667.0,331.1 668.0,333.6 669.0,336.2 670.0,338.7 671.0,341.2 672.0,343.8 673.0,346.3 674.0,348.8 675.0,351.4 676.0,353.9 677.0,356.5 678.0,359.0 679.0,361.6 680.0,364.1 681.0,366.6 682.0,369.2 683.0,371.7 684.0,374.2 685.0,376.8 686.0,379.3 687.0,381.8 688.0,384.3 689.0,386.7 690.0,389.2 691.0,391.7 692.0,394.1 693.0,396.6 694.0,399.0 695.0,401.4 696.0,403.8 697.0,406.2 698.0,408.6 699.0,410.9 700.0,413.2 701.0,415.5 702.0,417.8 703.0,420.1 704.0,422.4 705.0,424.6 706.0,426.8 707.0,429.0 708.0,431.1 709.0,433.3 710.0,435.4 711.0,437.5 712.0,439.6 713.0,441.6 714.0,443.6 715.0,445.6 716.0,447.5 717.0,449.5 718.0,451.4 719.0,453.2 720.0,455.1 721.0,456.9 722.0,458.6 723.0,460.4 724.0,462.1 725.0,463.7 726.0,465.4 727.0,467.0 728.0,468.5 729.0,470.1 730.0,471.6 731.0,473.0 732.0,474.4 733.0,475.8 734.0,477.2 735.0,478.5 736.0,479.8 737.0,481.0 738.0,482.2 739.0,483.3 740.0,484.4 741.0,485.5 742.0,486.5 743.0,487.5 744.0,488.5 745.0,489.4 746.0,490.2 747.0,491.1 748.0,491.8 749.0,492.6 750.0,493.3 751.0,493.9 752.0,494.5 753.0,495.1 754.0,495.6 755.0,496.1 756.0,496.5 757.0,496.9 758.0,497.2 759.0,497.5 760.0,497.8 761.0,498.0 762.0,498.1 763.0,498.3 764.0,498.3 765.0,498.4 766.0,498.3 767.0,498.3 768.0,498.2 769.0,498.0 770.0,497.8 771.0,497.6 772.0,497.3 773.0,497.0 774.0,496.6 775.0,496.2 776.0,495.7 777.0,495.2 778.0,494.7 779.0,494.1 780.0,493.4 781.0,492.7 782.0,492.0 783.0,491.2 784.0,490.4 785.0,489.6 786.0,488.7 787.0,487.8 788.0,486.8 789.0,485.8 790.0,484.7 791.0,483.6 792.0,482.5 793.0,481.3 794.0,480.1 795.0,478.8 796.0,477.5 797.0,476.2 798.0,474.8 799.0,473.4 800.0,471.9 801.0,470.4 802.0,468.9 803.0,467.4 804.0,465.8 805.0,464.1 806.0,462.5 807.0,460.8 808.0,459.0 809.0,457.3 810.0,455.5 811.0,453.7 812.0,451.8 813.0,449.9 814.0,448.0 815.0,446.1 816.0,444.1 817.0,442.1 818.0,440.0 819.0,438.0 820.0,435.9 821.0,433.8 822.0,431.7 823.0,429.5 824.0,427.3 825.0,425.1 826.0,422.9 827.0,420.6 828.0,418.4 829.0,416.1 830.0,413.8 831.0,411.5 832.0,409.1 833.0,406.8 834.0,404.4 835.0,402.0 836.0,399.6 837.0,397.2 838.0,394.7 839.0,392.3 840.0,389.8 841.0,387.3 842.0,384.9 843.0,382.4 844.0,379.9 845.0,377.4 846.0,374.8 847.0,372.3 848.0,369.8 849.0,367.3 850.0,364.7 851.0,362.2 852.0,359.6 853.0,357.1 854.0,354.5 855.0,352.0 856.0,349.5 857.0,346.9 858.0,344.4 859.0,341.8 860.0,339.3 861.0,336.8 862.0,334.2 863.0,331.7 864.0,329.2 865.0,326.7 866.0,324.2 867.0,321.7 868.0,319.2 869.0,316.8 870.0,314.3 871.0,311.9 872.0,309.4 873.0,307.0 874.0,304.6 875.0,302.2 876.0,299.9 877.0,297.5 878.0,295.2 879.0,292.9 880.0,290.6 881.0,288.3 882.0,286.0 883.0,283.8 884.0,281.6 885.0,279.4 886.0,277.2 887.0,275.1 888.0,272.9 889.0,270.8 890.0,268.8 891.0,266.7 892.0,264.7 893.0,262.7 894.0,260.7 895.0,258.8 896.0,256.9 897.0,255.0 898.0,253.2 899.0,251.4 900.0,249.6 901.0,247.9 902.0,246.1 903.0,244.5 904.0,242.8 905.0,241.2 906.0,239.6 907.0,238.1 908.0,236.6 909.0,235.1 910.0,233.7 911.0,232.3 912.0,230.9 913.0,229.6 914.0,228.3 915.0,227.1 916.0,225.9 917.0,224.7 918.0,223.6 919.0,222.5 920.0,221.4 921.0,220.4 922.0,219.5 923.0,218.6 924.0,217.7 925.0,216.9 926.0,216.1 927.0,215.3 928.0,214.6 929.0,214.0 930.0,213.3 931.0,212.8 932.0,212.2 933.0,211.7 934.0,211.3 935.0,210.9 936.0,210.5 937.0,210.2 938.0,210.0 939.0,209.7 940.0,209.6 941.0,209.4 942.0,209.3 943.0,209.3 944.0,209.3 945.0,209.4 946.0,209.4 947.0,209.6 948.0,209.8 949.0,210.0 950.0,210.3 951.0,210.6 952.0,210.9 953.0,211.3 954.0,211.8 955.0,212.3 956.0,212.8 957.0,213.4 958.0,214.0 959.0,214.7 960.0,215.4 961.0,216.2 962.0,217.0 963.0,217.8 964.0,218.7 965.0,219.6 966.0,220.6 967.0,221.6 968.0,222.6 969.0,223.7 970.0,224.8 971.0,226.0 972.0,227.2 973.0,228.5 974.0,229.7 975.0,231.1 976.0,232.4 977.0,233.8 978.0,235.3 979.0,236.7 980.0,238.3 981.0,239.8 982.0,241.4 983.0,243.0" fill="none" stroke="#f08a30" stroke-width="1.2"/>
<polyline points="92.0,241.9 93.0,239.4 94.0,236.8 95.0,234.3 96.0,231.8 97.0,229.4 98.0,227.0 99.0,224.7 100.0,222.4 101.0,220.1 102.0,217.9 103.0,215.7 104.0,213.5 105.0,211.4 106.0,209.4 107.0,207.3 108.0,205.4 109.0,203.4 110.0,201.6 111.0,199.7 112.0,198.0 113.0,196.2 114.0,194.5 115.0,192.9 116.0,191.3 117.0,189.8 118.0,188.3 119.0,186.8 120.0,185.5 121.0,184.1 122.0,182.9 123.0,181.6 124.0,180.4 125.0,179.3 126.0,178.3 127.0,177.3 128.0,176.3 129.0,175.4 130.0,174.5 131.0,173.7 132.0,173.0 133.0,172.3 134.0,171.7 135.0,171.1 136.0,170.6 137.0,170.2 138.0,169.8 139.0,169.4 140.0,169.1 141.0,168.9 142.0,168.7 143.0,168.6 144.0,168.6 145.0,168.6 146.0,168.6 147.0,168.7 148.0,168.9 149.0,169.1 150.0,169.4 151.0,169.8 152.0,170.2 153.0,170.6 154.0,171.1 155.0,171.7 156.0,172.3 157.0,173.0 158.0,173.7 159.0,174.5 160.0,175.4 161.0,176.3 162.0,177.3 163.0,178.3 164.0,179.3 165.0,180.4 166.0,181.6 167.0,182.9 168.0,184.1 169.0,185.5 170.0,186.8 171.0,188.3 172.0,189.8 173.0,191.3 174.0,192.9 175.0,194.5 176.0,196.2 177.0,198.0 178.0,199.7 179.0,201.6 180.0,203.4 181.0,205.4 182.0,207.3 183.0,209.4 184.0,211.4 185.0,213.5 186.0,215.7 187.0,217.9 188.0,220.1 189.0,222.4 190.0,224.7 191.0,227.0 192.0,229.4 193.0,231.8 194.0,234.3 195.0,236.8 196.0,239.4 197.0,241.9 198.0,244.5 199.0,247.2 200.0,249.9 201.0,252.6 202.0,255.3 203.0,258.1 204.0,260.9 205.0,263.7 206.0,266.6 207.0,269.4 208.0,272.4 209.0,275.3 210.0,278.2 211.0,281.2 212.0,284.2 213.0,287.2 214.0,290.3 215.0,293.4 216.0,296.4 217.0,299.5 218.0,302.7 219.0,305.8 220.0,308.9 221.0,312.1 222.0,315.3 223.0,318.5 224.0,321.6 225.0,324.9 226.0,328.1 227.0,331.3 228.0,334.5 229.0,337.7 230.0,341.0 231.0,344.2 232.0,347.5 233.0,350.7 234.0,354.0 235.0,357.2 236.0,360.5 237.0,363.7 238.0,366.9 239.0,370.2 240.0,373.4 241.0,376.6 242.0,379.8 243.0,383.0 244.0,386.2 245.0,389.4 246.0,392.6 247.0,395.8 248.0,398.9 249.0,402.1 250.0,405.2 251.0,408.3 252.0,411.4 253.0,414.4 254.0,417.5 255.0,420.5 256.0,423.5 257.0,426.5 258.0,429.5 259.0,432.4 260.0,435.3 261.0,438.2 262.0,441.1 263.0,443.9 264.0,446.7 265.0,449.5 266.0,452.3 267.0,455.0 268.0,457.7 269.0,460.3 270.0,463.0 271.0,465.5 272.0,468.1 273.0,470.6 274.0,473.1 275.0,475.5 276.0,477.9 277.0,480.3 278.0,482.6 279.0,484.9 280.0,487.2 281.0,489.4 282.0,491.5 283.0,493.6 284.0,495.7 285.0,497.7 286.0,499.7 287.0,501.7 288.0,503.6 289.0,505.4 290.0,507.2 291.0,509.0 292.0,510.7 293.0,512.3 294.0,513.9 295.0,515.5 296.0,517.0 297.0,518.4 298.0,519.8 299.0,521.2 300.0,522.5 301.0,523.7 302.0,524.9 303.0,526.0 304.0,527.1 305.0,528.2 306.0,529.1 307.0,530.0 308.0,530.9 309.0,531.7 310.0,532.5 311.0,533.2 312.0,533.8 313.0,534.4 314.0,534.9 315.0,535.4 316.0,535.8 317.0,536.2 318.0,536.5 319.0,536.7 320.0,536.9 321.0,537.1 322.0,537.1 323.0,537.2 324.0,537.1 325.0,537.0 326.0,536.9 327.0,536.7 328.0,536.4 329.0,536.1 330.0,535.7 331.0,535.2 332.0,534.8 333.0,534.2 334.0,533.6 335.0,532.9 336.0,532.2 337.0,531.4 338.0,530.6 339.0,529.7 340.0,528.8 341.0,527.8 342.0,526.7 343.0,525.6 344.0,524.5 345.0,523.3 346.0,522.0 347.0,520.7 348.0,519.3 349.0,517.9 350.0,516.4 351.0,514.9 352.0,513.3 353.0,511.7 354.0,510.0 355.0,508.3 356.0,506.6 357.0,504.7 358.0,502.9 359.0,501.0 360.0,499.0 361.0,497.0 362.0,495.0 363.0,492.9 364.0,490.7 365.0,488.6 366.0,486.4 367.0,484.1 368.0,481.8 369.0,479.5 370.0,477.1 371.0,474.7 372.0,472.2 373.0,469.7 374.0,467.2 375.0,464.6 376.0,462.0 377.0,459.4 378.0,456.7 379.0,454.0 380.0,451.3 381.0,448.5 382.0,445.7 383.0,442.9 384.0,440.1 385.0,437.2 386.0,434.3 387.0,431.4 388.0,428.4 389.0,425.5 390.0,422.5 391.0,419.4 392.0,416.4 393.0,413.3 394.0,410.3 395.0,407.2 396.0,404.1 397.0,400.9 398.0,397.8 399.0,394.6 400.0,391.5 401.0,388.3 402.0,385.1 403.0,381.9 404.0,378.7 405.0,375.5 406.0,372.2 407.0,369.0 408.0,365.8 409.0,362.5 410.0,359.3 411.0,356.0 412.0,352.8 413.0,349.5 414.0,346.3 415.0,343.1 416.0,339.8 417.0,336.6 418.0,333.4 419.0,330.1 420.0,326.9 421.0,323.7 422.0,320.5 423.0,317.3 424.0,314.1 425.0,311.0 426.0,307.8 427.0,304.7 428.0,301.5 429.0,298.4 430.0,295.3 431.0,292.3 432.0,289.2 433.0,286.2 434.0,283.1 435.0,280.1 436.0,277.2 437.0,274.2 438.0,271.3 439.0,268.4 440.0,265.5 441.0,262.7 442.0,259.9 443.0,257.1 444.0,254.3 445.0,251.6 446.0,248.9 447.0,246.2 448.0,243.6 449.0,241.0 450.0,238.4 451.0,235.9 452.0,233.4 453.0,231.0 454.0,228.5 455.0,226.2 456.0,223.8 457.0,221.5 458.0,219.3 459.0,217.1 460.0,214.9 461.0,212.8 462.0,210.7 463.0,208.6 464.0,206.6 465.0,204.7 466.0,202.8 467.0,200.9 468.0,199.1 469.0,197.3 470.0,195.6 471.0,193.9 472.0,192.3 473.0,190.7 474.0,189.2 475.0,187.8 476.0,186.3 477.0,185.0 478.0,183.7 479.0,182.4 480.0,181.2 481.0,180.0 482.0,178.9 483.0,177.9 484.0,176.9 485.0,176.0 486.0,175.1 487.0,174.2 488.0,173.5 489.0,172.8 490.0,172.1 491.0,171.5 492.0,170.9 493.0,170.5 494.0,170.0 495.0,169.6 496.0,169.3 497.0,169.1 498.0,168.8 499.0,168.7 500.0,168.6 501.0,168.6 502.0,168.6 503.0,168.7 504.0,168.8 505.0,169.0 506.0,169.2 507.0,169.5 508.0,169.9 509.0,170.3 510.0,170.8 511.0,171.3 512.0,171.9 513.0,172.6 514.0,173.3 515.0,174.0 516.0,174.8 517.0,175.7 518.0,176.6 519.0,177.6 520.0,178.6 521.0,179.7 522.0,180.9 523.0,182.1 524.0,183.3 525.0,184.6 526.0,186.0 527.0,187.4 528.0,188.8 529.0,190.3 530.0,191.9 531.0,193.5 532.0,195.1 533.0,196.8 534.0,198.6 535.0,200.4 536.0,202.2 537.0,204.1 538.0,206.1 539.0,208.1 540.0,210.1 541.0,212.2 542.0,214.3 543.0,216.4 544.0,218.7 545.0,220.9 546.0,223.2 547.0,225.5 548.0,227.9 549.0,230.3 550.0,232.7 551.0,235.2 552.0,237.7 553.0,240.3 554.0,242.9 555.0,245.5 556.0,248.1 557.0,250.8 558.0,253.6 559.0,256.3 560.0,259.1 561.0,261.9 562.0,264.7 563.0,267.6 564.0,270.5 565.0,273.4 566.0,276.3 567.0,279.3 568.0,282.3 569.0,285.3 570.0,288.3 571.0,291.4 572.0,294.5 573.0,297.6 574.0,300.7 575.0,303.8 576.0,306.9 577.0,310.1 578.0,313.2 579.0,316.4 580.0,319.6 581.0,322.8 582.0,326.0 583.0,329.2 584.0,332.4 585.0,335.7 586.0,338.9 587.0,342.2 588.0,345.4 589.0,348.6 590.0,351.9 591.0,355.1 592.0,358.4 593.0,361.6 594.0,364.9 595.0,368.1 596.0,371.3 597.0,374.6 598.0,377.8 599.0,381.0 600.0,384.2 601.0,387.4 602.0,390.6 603.0,393.8 604.0,396.9 605.0,400.1 606.0,403.2 607.0,406.3 608.0,409.4 609.0,412.5 610.0,415.5 611.0,418.6 612.0,421.6 613.0,424.6 614.0,427.6 615.0,430.6 616.0,433.5 617.0,436.4 618.0,439.3 619.0,442.1 620.0,445.0 621.0,447.8 622.0,450.5 623.0,453.3 624.0,456.0 625.0,458.6 626.0,461.3 627.0,463.9 628.0,466.5 629.0,469.0 630.0,471.5 631.0,474.0 632.0,476.4 633.0,478.8 634.0,481.1 635.0,483.5 636.0,485.7 637.0,488.0 638.0,490.1 639.0,492.3 640.0,494.4 641.0,496.4 642.0,498.5 643.0,500.4 644.0,502.4 645.0,504.2 646.0,506.1 647.0,507.8 648.0,509.6 649.0,511.3 650.0,512.9 651.0,514.5 652.0,516.0 653.0,517.5 654.0,518.9 655.0,520.3 656.0,521.6 657.0,522.9 658.0,524.1 659.0,525.3 660.0,526.4 661.0,527.5 662.0,528.5 663.0,529.5 664.0,530.4 665.0,531.2 666.0,532.0 667.0,532.7 668.0,533.4 669.0,534.0 670.0,534.6 671.0,535.1 672.0,535.6 673.0,536.0 674.0,536.3 675.0,536.6 676.0,536.8 677.0,537.0 678.0,537.1 679.0,537.2 680.0,537.2 681.0,537.1 682.0,537.0 683.0,536.8 684.0,536.6 685.0,536.3 686.0,535.9 687.0,535.5 688.0,535.1 689.0,534.6 690.0,534.0 691.0,533.4 692.0,532.7 693.0,531.9 694.0,531.1 695.0,530.3 696.0,529.4 697.0,528.4 698.0,527.4 699.0,526.3 700.0,525.2 701.0,524.0 702.0,522.8 703.0,521.5 704.0,520.2 705.0,518.8 706.0,517.4 707.0,515.9 708.0,514.3 709.0,512.8 710.0,511.1 711.0,509.4 712.0,507.7 713.0,505.9 714.0,504.1 715.0,502.2 716.0,500.3 717.0,498.3 718.0,496.3 719.0,494.2 720.0,492.1 721.0,490.0 722.0,487.8 723.0,485.5 724.0,483.3 725.0,481.0 726.0,478.6 727.0,476.2 728.0,473.8 729.0,471.3 730.0,468.8 731.0,466.3 732.0,463.7 733.0,461.1 734.0,458.4 735.0,455.8 736.0,453.0 737.0,450.3 738.0,447.5 739.0,444.7 740.0,441.9 741.0,439.0 742.0,436.2 743.0,433.3 744.0,430.3 745.0,427.4 746.0,424.4 747.0,421.4 748.0,418.3 749.0,415.3 750.0,412.2 751.0,409.2 752.0,406.1 753.0,402.9 754.0,399.8 755.0,396.7 756.0,393.5 757.0,390.3 758.0,387.1 759.0,383.9 760.0,380.7 761.0,377.5 762.0,374.3 763.0,371.1 764.0,367.8 765.0,364.6 766.0,361.4 767.0,358.1 768.0,354.9 769.0,351.6 770.0,348.4 771.0,345.1 772.0,341.9 773.0,338.7 774.0,335.4 775.0,332.2 776.0,329.0 777.0,325.7 778.0,322.5 779.0,319.3 780.0,316.2 781.0,313.0 782.0,309.8 783.0,306.7 784.0,303.5 785.0,300.4 786.0,297.3 787.0,294.2 788.0,291.1 789.0,288.1 790.0,285.1 791.0,282.1 792.0,279.1 793.0,276.1 794.0,273.2 795.0,270.3 796.0,267.4 797.0,264.5 798.0,261.7 799.0,258.9 800.0,256.1 801.0,253.3 802.0,250.6 803.0,247.9 804.0,245.3 805.0,242.7 806.0,240.1 807.0,237.5 808.0,235.0 809.0,232.5 810.0,230.1 811.0,227.7 812.0,225.3 813.0,223.0 814.0,220.7 815.0,218.5 816.0,216.3 817.0,214.1 818.0,212.0 819.0,209.9 820.0,207.9 821.0,205.9 822.0,204.0 823.0,202.1 824.0,200.2 825.0,198.4 826.0,196.7 827.0,195.0 828.0,193.3 829.0,191.7 830.0,190.2 831.0,188.7 832.0,187.2 833.0,185.8 834.0,184.5 835.0,183.2 836.0,182.0 837.0,180.8 838.0,179.6 839.0,178.6 840.0,177.5 841.0,176.6 842.0,175.6 843.0,174.8 844.0,174.0 845.0,173.2 846.0,172.5 847.0,171.9 848.0,171.3 849.0,170.8 850.0,170.3 851.0,169.9 852.0,169.5 853.0,169.2 854.0,169.0 855.0,168.8 856.0,168.7 857.0,168.6 858.0,168.6 859.0,168.6 860.0,168.7 861.0,168.9 862.0,169.1 863.0,169.3 864.0,169.7 865.0,170.0 866.0,170.5 867.0,171.0 868.0,171.5 869.0,172.1 870.0,172.8 871.0,173.5 872.0,174.3 873.0,175.1 874.0,176.0 875.0,177.0 876.0,178.0 877.0,179.0 878.0,180.1 879.0,181.3 880.0,182.5 881.0,183.8 882.0,185.1 883.0,186.5 884.0,187.9 885.0,189.3 886.0,190.9 887.0,192.4 888.0,194.1 889.0,195.7 890.0,197.5 891.0,199.2 892.0,201.1 893.0,202.9 894.0,204.8 895.0,206.8 896.0,208.8 897.0,210.8 898.0,212.9 899.0,215.1 900.0,217.2 901.0,219.5 902.0,221.7 903.0,224.0 904.0,226.4 905.0,228.7 906.0,231.2 907.0,233.6 908.0,236.1 909.0,238.6 910.0,241.2 911.0,243.8 912.0,246.4 913.0,249.1 914.0,251.8 915.0,254.5 916.0,257.3 917.0,260.1 918.0,262.9 919.0,265.8 920.0,268.6 921.0,271.5 922.0,274.5 923.0,277.4 924.0,280.4 925.0,283.4 926.0,286.4 927.0,289.4 928.0,292.5 929.0,295.6 930.0,298.7 931.0,301.8 932.0,304.9 933.0,308.1 934.0,311.2 935.0,314.4 936.0,317.6 937.0,320.8 938.0,324.0 939.0,327.2 940.0,330.4 941.0,333.6 942.0,336.8 943.0,340.1 944.0,343.3 945.0,346.6 946.0,349.8 947.0,353.1 948.0,356.3 949.0,359.5 950.0,362.8 951.0,366.0 952.0,369.3 953.0,372.5 954.0,375.7 955.0,378.9 956.0,382.2 957.0,385.4 958.0,388.5 959.0,391.7 960.0,394.9 961.0,398.0 962.0,401.2 963.0,404.3 964.0,407.4 965.0,410.5 966.0,413.6 967.0,416.6 968.0,419.7 969.0,422.7 970.0,425.7 971.0,428.7 972.0,431.6 973.0,434.5 974.0,437.4 975.0,440.3 976.0,443.1 977.0,446.0 978.0,448.8 979.0,451.5 980.0,454.2 981.0,456.9 982.0,459.6 983.0,462.2" fill="none" stroke="#c058c0" stroke-width="1.2"/>
<polyline points="92.0,292.0 94.0,290.0 96.0,286.8 98.0,284.2 100.0,281.2 102.0,279.5 104.0,278.5 106.0,275.7 108.0,274.2 110.0,271.5 112.0,269.8 114.0,267.8 116.0,264.5 118.0,265.2 120.0,263.5 122.0,262.2 124.0,259.0 126.0,257.8 128.0,257.6 130.0,257.1 132.0,257.1 134.0,256.2 136.0,256.2 138.0,254.7 140.0,255.3 142.0,255.3 144.0,254.3 146.0,256.5 148.0,255.7 150.0,256.6 152.0,255.5 154.0,256.0 156.0,257.0 158.0,258.1 160.0,259.7 162.0,260.4 164.0,260.9 166.0,261.8 168.0,263.6 170.0,266.6 172.0,266.4 174.0,269.1 176.0,271.1 178.0,271.3 180.0,274.7 182.0,278.0 184.0,277.2 186.0,281.0 188.0,283.6 190.0,285.5 192.0,289.2 194.0,291.4 196.0,292.9 198.0,297.7 200.0,300.4 202.0,303.6 204.0,307.1 206.0,309.2 208.0,312.0 210.0,313.9 212.0,318.9 214.0,321.0 216.0,324.4 218.0,327.0 220.0,330.7 222.0,334.4 224.0,339.5 226.0,339.9 228.0,343.9 230.0,348.8 232.0,353.4 234.0,356.0 236.0,357.3 238.0,360.1 240.0,366.2 242.0,368.6 244.0,371.6 246.0,376.9 248.0,380.3 250.0,382.8 252.0,386.1 254.0,389.5 256.0,393.8 258.0,396.0 260.0,399.0 262.0,402.1 264.0,403.1 266.0,408.6 268.0,411.1 270.0,413.5 272.0,413.9 274.0,417.8 276.0,421.6 278.0,421.7 280.0,425.5 282.0,428.8 284.0,428.9 286.0,433.6 288.0,434.6 290.0,435.9 292.0,438.1 294.0,440.0 296.0,441.1 298.0,443.5 300.0,443.2 302.0,444.7 304.0,447.1 306.0,447.2 308.0,447.2 310.0,449.6 312.0,450.7 314.0,449.5 316.0,449.1 318.0,450.5 320.0,450.7 322.0,450.6 324.0,452.0 326.0,449.6 328.0,451.3 330.0,448.6 332.0,448.5 334.0,449.1 336.0,448.7 338.0,447.6 340.0,446.0 342.0,444.7 344.0,443.5 346.0,442.4 348.0,440.3 350.0,439.1 352.0,437.6 354.0,435.3 356.0,434.1 358.0,431.9 360.0,431.1 362.0,427.4 364.0,424.4 366.0,422.0 368.0,419.9 370.0,418.2 372.0,414.4 374.0,412.3 376.0,410.9 378.0,404.0 380.0,402.4 382.0,400.7 384.0,397.7 386.0,394.5 388.0,390.7 390.0,388.5 392.0,384.9 394.0,380.9 396.0,380.3 398.0,375.1 400.0,370.9 402.0,367.9 404.0,364.3 406.0,361.0 408.0,355.2 410.0,353.8 412.0,351.7 414.0,346.3 416.0,343.8 418.0,341.3 420.0,337.8 422.0,335.0 424.0,328.7 426.0,326.6 428.0,323.3 430.0,320.9 432.0,318.1 434.0,311.5 436.0,311.7 438.0,306.4 440.0,305.2 442.0,300.3 444.0,298.9 446.0,297.0 448.0,293.0 450.0,290.6 452.0,288.5 454.0,285.4 456.0,282.7 458.0,281.8 460.0,279.1 462.0,275.7 464.0,276.4 466.0,270.9 468.0,270.8 470.0,268.0 472.0,266.6 474.0,265.6 476.0,263.7 478.0,262.7 480.0,259.5 482.0,258.4 484.0,259.3 486.0,257.0 488.0,256.1 490.0,255.1 492.0,257.0 494.0,256.1 496.0,256.5 498.0,254.1 500.0,254.9 502.0,253.9 504.0,255.8 506.0,256.9 508.0,255.1 510.0,257.8 512.0,258.0 514.0,257.7 516.0,257.0 518.0,261.1 520.0,260.9 522.0,261.7 524.0,263.9 526.0,265.4 528.0,268.0 530.0,267.4 532.0,271.1 534.0,273.3 536.0,275.3 538.0,275.9 540.0,277.6 542.0,281.5 544.0,283.1 546.0,285.5 548.0,289.2 550.0,290.3 552.0,291.2 554.0,295.7 556.0,297.2 558.0,302.6 560.0,305.1 562.0,307.3 564.0,310.9 566.0,314.8 568.0,317.3 570.0,321.7 572.0,323.7 574.0,328.0 576.0,331.8 578.0,335.3 580.0,336.6 582.0,341.4 584.0,342.4 586.0,346.5 588.0,349.2 590.0,355.4 592.0,356.8 594.0,361.3 596.0,364.6 598.0,368.1 600.0,371.0 602.0,375.1 604.0,379.9 606.0,381.6 608.0,385.4 610.0,389.0 612.0,391.1 614.0,393.3 616.0,397.1 618.0,401.6 620.0,402.1 622.0,406.0 624.0,410.3 626.0,412.9 628.0,414.9 630.0,418.2 632.0,420.2 634.0,421.5 636.0,423.5 638.0,426.6 640.0,430.2 642.0,431.0 644.0,432.7 646.0,434.7 648.0,435.9 650.0,438.8 652.0,439.5 654.0,442.3 656.0,441.3 658.0,445.0 660.0,445.2 662.0,445.1 664.0,448.4 666.0,448.3 668.0,447.2 670.0,449.0 672.0,450.5 674.0,450.1 676.0,451.5 678.0,451.5 680.0,451.4 682.0,450.9 684.0,451.5 686.0,450.5 688.0,449.8 690.0,446.9 692.0,448.8 694.0,448.3 696.0,445.8 698.0,444.5 700.0,445.5 702.0,440.8 704.0,441.3 706.0,441.5 708.0,436.9 710.0,436.5 712.0,435.7 714.0,431.9 716.0,430.5 718.0,428.6 720.0,424.7 722.0,423.1 724.0,421.0 726.0,418.9 728.0,415.5 730.0,412.7 732.0,409.2 734.0,406.9 736.0,405.2 738.0,401.5 740.0,397.6 742.0,394.5 744.0,394.5 746.0,390.0 748.0,386.3 750.0,380.1 752.0,379.7 754.0,376.2 756.0,374.0 758.0,369.4 760.0,365.6 762.0,362.7 764.0,357.0 766.0,356.2 768.0,352.2 770.0,347.8 772.0,346.2 774.0,343.2 776.0,336.8 778.0,334.1 780.0,331.6 782.0,328.1 784.0,324.3 786.0,320.5 788.0,320.0 790.0,315.8 792.0,310.7 794.0,307.4 796.0,307.1 798.0,303.5 800.0,301.3 802.0,297.5 804.0,293.2 806.0,291.5 808.0,286.7 810.0,285.4 812.0,283.5 814.0,281.7 816.0,278.2 818.0,276.6 820.0,275.0 822.0,272.9 824.0,271.2 826.0,269.0 828.0,266.8 830.0,266.1 832.0,264.0 834.0,261.8 836.0,260.7 838.0,260.1 840.0,258.9 842.0,258.2 844.0,257.3 846.0,256.7 848.0,255.9 850.0,254.4 852.0,255.6 854.0,255.9 856.0,255.3 858.0,254.8 860.0,255.5 862.0,254.5 864.0,254.0 866.0,256.3 868.0,256.0 870.0,258.3 872.0,257.5 874.0,257.1 876.0,259.6 878.0,263.2 880.0,262.8 882.0,263.3 884.0,265.4 886.0,268.2 888.0,270.0 890.0,271.5 892.0,274.7 894.0,276.1 896.0,277.6 898.0,280.4 900.0,283.7 902.0,285.5 904.0,288.1 906.0,288.8 908.0,292.3 910.0,295.8 912.0,297.7 914.0,301.8 916.0,304.4 918.0,307.7 920.0,309.7 922.0,315.4 924.0,317.4 926.0,319.3 928.0,322.8 930.0,328.4 932.0,329.1 934.0,333.5 936.0,337.0 938.0,339.5 940.0,341.9 942.0,346.6 944.0,350.2 946.0,354.3 948.0,357.5 950.0,360.2 952.0,364.4 954.0,367.6 956.0,370.7 958.0,373.9 960.0,377.0 962.0,381.2 964.0,382.9 966.0,386.5 968.0,390.3 970.0,392.2 972.0,396.2 974.0,397.8 976.0,402.0 978.0,406.1 980.0,409.0 982.0,411.2" fill="none" stroke="#8ad8e8" stroke-width="1.2"/>
<polyline points="92.0,350.5 93.0,346.2 94.0,341.9 95.0,337.7 96.0,333.4 97.0,329.1 98.0,324.9 99.0,320.6 100.0,316.4 101.0,312.1 102.0,307.9 103.0,303.7 104.0,299.5 105.0,295.4 106.0,291.2 107.0,287.1 108.0,283.0 109.0,278.9 110.0,274.8 111.0,270.8 112.0,266.8 113.0,262.8 114.0,258.8 115.0,254.9 116.0,251.0 117.0,247.1 118.0,243.3 119.0,239.5 120.0,235.7 121.0,232.0 122.0,228.3 123.0,224.7 124.0,221.1 125.0,217.5 126.0,214.0 127.0,210.5 128.0,207.1 129.0,203.7 130.0,200.4 131.0,197.1 132.0,193.8 133.0,190.6 134.0,187.5 135.0,184.4 136.0,181.4 137.0,178.4 138.0,175.5 139.0,172.6 140.0,169.8 141.0,167.0 142.0,164.3 143.0,161.7 144.0,159.1 145.0,156.6 146.0,154.1 147.0,151.7 148.0,149.4 149.0,147.1 150.0,144.9 151.0,142.8 152.0,140.7 153.0,138.7 154.0,136.7 155.0,134.9 156.0,133.1 157.0,131.3 158.0,129.7 159.0,128.1 160.0,126.6 161.0,125.2 162.0,124.0 163.0,122.8 164.0,121.8 165.0,120.9 166.0,120.0 167.0,119.3 168.0,118.6 169.0,118.0 170.0,117.5 171.0,117.1 172.0,116.7 173.0,116.3 174.0,116.1 175.0,115.8 176.0,115.6 177.0,115.5 178.0,115.4 179.0,115.3 180.0,115.3 181.0,115.3 182.0,115.4 183.0,115.5 184.0,115.6 185.0,115.8 186.0,116.0 187.0,116.3 188.0,116.6 189.0,116.9 190.0,117.4 191.0,117.9 192.0,118.4 193.0,119.1 194.0,119.8 195.0,120.6 196.0,121.5 197.0,122.5 198.0,123.6 199.0,124.8 200.0,126.2 201.0,127.6 202.0,129.1 203.0,130.8 204.0,132.5 205.0,134.3 206.0,136.1 207.0,138.0 208.0,140.0 209.0,142.1 210.0,144.2 211.0,146.4 212.0,148.6 213.0,151.0 214.0,153.3 215.0,155.8 216.0,158.3 217.0,160.8 218.0,163.5 219.0,166.1 220.0,168.9 221.0,171.7 222.0,174.5 223.0,177.4 224.0,180.4 225.0,183.4 226.0,186.5 227.0,189.6 228.0,192.8 229.0,196.0 230.0,199.3 231.0,202.6 232.0,206.0 233.0,209.4 234.0,212.9 235.0,216.4 236.0,219.9 237.0,223.5 238.0,227.2 239.0,230.8 240.0,234.6 241.0,238.3 242.0,242.1 243.0,245.9 244.0,249.8 245.0,253.6 246.0,257.6 247.0,261.5 248.0,265.5 249.0,269.5 250.0,273.5 251.0,277.6 252.0,281.7 253.0,285.8 254.0,289.9 255.0,294.0 256.0,298.2 257.0,302.4 258.0,306.6 259.0,310.8 260.0,315.0 261.0,319.2 262.0,323.5 263.0,327.7 264.0,332.0 265.0,336.3 266.0,340.6 267.0,344.9 268.0,349.1 269.0,353.4 270.0,357.7 271.0,362.0 272.0,366.3 273.0,370.6 274.0,374.9 275.0,379.1 276.0,383.4 277.0,387.6 278.0,391.9 279.0,396.1 280.0,400.3 281.0,404.5 282.0,408.7 283.0,412.9 284.0,417.1 285.0,421.2 286.0,425.3 287.0,429.4 288.0,433.5 289.0,437.5 290.0,441.6 291.0,445.5 292.0,449.5 293.0,453.5 294.0,457.4 295.0,461.2 296.0,465.1 297.0,468.9 298.0,472.7 299.0,476.4 300.0,480.1 301.0,483.7 302.0,487.4 303.0,490.9 304.0,494.5 305.0,498.0 306.0,501.4 307.0,504.8 308.0,508.2 309.0,511.5 310.0,514.7 311.0,517.9 312.0,521.1 313.0,524.2 314.0,527.3 315.0,530.3 316.0,533.2 317.0,536.1 318.0,538.9 319.0,541.7 320.0,544.4 321.0,547.1 322.0,549.7 323.0,552.2 324.0,554.7 325.0,557.1 326.0,559.5 327.0,561.8 328.0,564.0 329.0,566.2 330.0,568.3 331.0,570.3 332.0,572.3 333.0,574.1 334.0,576.0 335.0,577.7 336.0,579.4 337.0,581.0 338.0,582.5 339.0,583.9 340.0,585.2 341.0,586.4 342.0,587.5 343.0,588.4 344.0,589.3 345.0,590.1 346.0,590.8 347.0,591.4 348.0,591.9 349.0,592.4 350.0,592.8 351.0,593.2 352.0,593.4 353.0,593.7 354.0,593.9 355.0,594.1 356.0,594.2 357.0,594.2 358.0,594.3 359.0,594.3 360.0,594.2 361.0,594.2 362.0,594.0 363.0,593.9 364.0,593.7 365.0,593.4 366.0,593.1 367.0,592.8 368.0,592.4 369.0,591.9 370.0,591.4 371.0,590.8 372.0,590.1 373.0,589.3 374.0,588.4 375.0,587.4 376.0,586.4 377.0,585.2 378.0,583.9 379.0,582.5 380.0,581.0 381.0,579.4 382.0,577.7 383.0,575.9 384.0,574.1 385.0,572.2 386.0,570.2 387.0,568.2 388.0,566.1 389.0,563.9 390.0,561.7 391.0,559.4 392.0,557.0 393.0,554.6 394.0,552.1 395.0,549.6 396.0,547.0 397.0,544.3 398.0,541.6 399.0,538.8 400.0,536.0 401.0,533.1 402.0,530.1 403.0,527.1 404.0,524.1 405.0,521.0 406.0,517.8 407.0,514.6 408.0,511.3 409.0,508.0 410.0,504.7 411.0,501.3 412.0,497.8 413.0,494.3 414.0,490.8 415.0,487.2 416.0,483.6 417.0,479.9 418.0,476.2 419.0,472.5 420.0,468.7 421.0,464.9 422.0,461.1 423.0,457.2 424.0,453.3 425.0,449.4 426.0,445.4 427.0,441.4 428.0,437.4 429.0,433.3 430.0,429.3 431.0,425.2 432.0,421.0 433.0,416.9 434.0,412.7 435.0,408.6 436.0,404.4 437.0,400.2 438.0,396.0 439.0,391.7 440.0,387.5 441.0,383.2 442.0,379.0 443.0,374.7 444.0,370.4 445.0,366.1 446.0,361.8 447.0,357.5 448.0,353.3 449.0,349.0 450.0,344.7 451.0,340.4 452.0,336.1 453.0,331.8 454.0,327.6 455.0,323.3 456.0,319.1 457.0,314.8 458.0,310.6 459.0,306.4 460.0,302.2 461.0,298.0 462.0,293.9 463.0,289.7 464.0,285.6 465.0,281.5 466.0,277.4 467.0,273.4 468.0,269.3 469.0,265.3 470.0,261.4 471.0,257.4 472.0,253.5 473.0,249.6 474.0,245.8 475.0,241.9 476.0,238.2 477.0,234.4 478.0,230.7 479.0,227.0 480.0,223.4 481.0,219.8 482.0,216.3 483.0,212.7 484.0,209.3 485.0,205.9 486.0,202.5 487.0,199.2 488.0,195.9 489.0,192.7 490.0,189.5 491.0,186.4 492.0,183.3 493.0,180.3 494.0,177.3 495.0,174.4 496.0,171.6 497.0,168.8 498.0,166.0 499.0,163.4 500.0,160.7 501.0,158.2 502.0,155.7 503.0,153.2 504.0,150.9 505.0,148.6 506.0,146.3 507.0,144.1 508.0,142.0 509.0,140.0 510.0,138.0 511.0,136.1 512.0,134.2 513.0,132.4 514.0,130.7 515.0,129.1 516.0,127.5 517.0,126.1 518.0,124.8 519.0,123.6 520.0,122.5 521.0,121.5 522.0,120.6 523.0,119.7 524.0,119.0 525.0,118.4 526.0,117.8 527.0,117.3 528.0,116.9 529.0,116.6 530.0,116.2 531.0,116.0 532.0,115.8 533.0,115.6 534.0,115.5 535.0,115.4 536.0,115.3 537.0,115.3 538.0,115.3 539.0,115.4 540.0,115.5 541.0,115.7 542.0,115.8 543.0,116.1 544.0,116.4 545.0,116.7 546.0,117.1 547.0,117.5 548.0,118.1 549.0,118.6 550.0,119.3 551.0,120.1 552.0,120.9 553.0,121.8 554.0,122.9 555.0,124.0 556.0,125.3 557.0,126.7 558.0,128.1 559.0,129.7 560.0,131.4 561.0,133.1 562.0,134.9 563.0,136.8 564.0,138.8 565.0,140.8 566.0,142.8 567.0,145.0 568.0,147.2 569.0,149.5 570.0,151.8 571.0,154.2 572.0,156.7 573.0,159.2 574.0,161.8 575.0,164.4 576.0,167.1 577.0,169.9 578.0,172.7 579.0,175.6 580.0,178.5 581.0,181.5 582.0,184.5 583.0,187.6 584.0,190.8 585.0,194.0 586.0,197.2 587.0,200.5 588.0,203.8 589.0,207.2 590.0,210.7 591.0,214.1 592.0,217.7 593.0,221.2 594.0,224.8 595.0,228.5 596.0,232.2 597.0,235.9 598.0,239.7 599.0,243.5 600.0,247.3 601.0,251.2 602.0,255.1 603.0,259.0 604.0,262.9 605.0,266.9 606.0,270.9 607.0,275.0 608.0,279.0 609.0,283.1 610.0,287.2 611.0,291.4 612.0,295.5 613.0,299.7 614.0,303.9 615.0,308.1 616.0,312.3 617.0,316.5 618.0,320.8 619.0,325.0 620.0,329.3 621.0,333.6 622.0,337.8 623.0,342.1 624.0,346.4 625.0,350.7 626.0,355.0 627.0,359.3 628.0,363.5 629.0,367.8 630.0,372.1 631.0,376.4 632.0,380.7 633.0,384.9 634.0,389.2 635.0,393.4 636.0,397.6 637.0,401.9 638.0,406.1 639.0,410.2 640.0,414.4 641.0,418.6 642.0,422.7 643.0,426.8 644.0,430.9 645.0,434.9 646.0,439.0 647.0,443.0 648.0,447.0 649.0,450.9 650.0,454.9 651.0,458.8 652.0,462.6 653.0,466.4 654.0,470.2 655.0,474.0 656.0,477.7 657.0,481.4 658.0,485.0 659.0,488.7 660.0,492.2 661.0,495.7 662.0,499.2 663.0,502.6 664.0,506.0 665.0,509.4 666.0,512.7 667.0,515.9 668.0,519.1 669.0,522.2 670.0,525.3 671.0,528.3 672.0,531.3 673.0,534.3 674.0,537.1 675.0,539.9 676.0,542.7 677.0,545.4 678.0,548.0 679.0,550.6 680.0,553.1 681.0,555.6 682.0,558.0 683.0,560.3 684.0,562.6 685.0,564.8 686.0,566.9 687.0,569.0 688.0,571.0 689.0,572.9 690.0,574.8 691.0,576.6 692.0,578.4 693.0,580.0 694.0,581.6 695.0,583.0 696.0,584.4 697.0,585.7 698.0,586.8 699.0,587.8 700.0,588.8 701.0,589.6 702.0,590.4 703.0,591.0 704.0,591.6 705.0,592.1 706.0,592.6 707.0,592.9 708.0,593.3 709.0,593.5 710.0,593.8 711.0,594.0 712.0,594.1 713.0,594.2 714.0,594.3 715.0,594.3 716.0,594.3 717.0,594.2 718.0,594.1 719.0,594.0 720.0,593.8 721.0,593.6 722.0,593.3 723.0,593.0 724.0,592.6 725.0,592.2 726.0,591.7 727.0,591.2 728.0,590.5 729.0,589.8 730.0,589.0 731.0,588.1 732.0,587.1 733.0,585.9 734.0,584.7 735.0,583.4 736.0,581.9 737.0,580.4 738.0,578.8 739.0,577.0 740.0,575.3 741.0,573.4 742.0,571.5 743.0,569.5 744.0,567.4 745.0,565.3 746.0,563.1 747.0,560.9 748.0,558.6 749.0,556.2 750.0,553.7 751.0,551.2 752.0,548.7 753.0,546.0 754.0,543.4 755.0,540.6 756.0,537.8 757.0,535.0 758.0,532.0 759.0,529.1 760.0,526.0 761.0,523.0 762.0,519.8 763.0,516.7 764.0,513.4 765.0,510.2 766.0,506.8 767.0,503.5 768.0,500.0 769.0,496.6 770.0,493.1 771.0,489.5 772.0,485.9 773.0,482.3 774.0,478.6 775.0,474.9 776.0,471.1 777.0,467.4 778.0,463.5 779.0,459.7 780.0,455.8 781.0,451.9 782.0,447.9 783.0,444.0 784.0,439.9 785.0,435.9 786.0,431.9 787.0,427.8 788.0,423.7 789.0,419.6 790.0,415.4 791.0,411.2 792.0,407.1 793.0,402.9 794.0,398.7 795.0,394.4 796.0,390.2 797.0,385.9 798.0,381.7 799.0,377.4 800.0,373.1 801.0,368.9 802.0,364.6 803.0,360.3 804.0,356.0 805.0,351.7 806.0,347.4 807.0,343.1 808.0,338.9 809.0,334.6 810.0,330.3 811.0,326.0 812.0,321.8 813.0,317.5 814.0,313.3 815.0,309.1 816.0,304.9 817.0,300.7 818.0,296.5 819.0,292.4 820.0,288.2 821.0,284.1 822.0,280.0 823.0,276.0 824.0,271.9 825.0,267.9 826.0,263.9 827.0,259.9 828.0,256.0 829.0,252.1 830.0,248.2 831.0,244.4 832.0,240.6 833.0,236.8 834.0,233.1 835.0,229.4 836.0,225.7 837.0,222.1 838.0,218.5 839.0,215.0 840.0,211.5 841.0,208.1 842.0,204.7 843.0,201.3 844.0,198.0 845.0,194.7 846.0,191.5 847.0,188.4 848.0,185.3 849.0,182.2 850.0,179.2 851.0,176.3 852.0,173.4 853.0,170.6 854.0,167.8 855.0,165.1 856.0,162.4 857.0,159.8 858.0,157.3 859.0,154.8 860.0,152.4 861.0,150.0 862.0,147.7 863.0,145.5 864.0,143.4 865.0,141.3 866.0,139.2 867.0,137.3 868.0,135.4 869.0,133.6 870.0,131.8 871.0,130.1 872.0,128.5 873.0,127.0 874.0,125.6 875.0,124.3 876.0,123.2 877.0,122.1 878.0,121.1 879.0,120.3 880.0,119.5 881.0,118.8 882.0,118.2 883.0,117.7 884.0,117.2 885.0,116.8 886.0,116.4 887.0,116.1 888.0,115.9 889.0,115.7 890.0,115.5 891.0,115.4 892.0,115.4 893.0,115.3 894.0,115.3 895.0,115.4 896.0,115.4 897.0,115.6 898.0,115.7 899.0,115.9 900.0,116.2 901.0,116.5 902.0,116.8 903.0,117.2 904.0,117.7 905.0,118.3 906.0,118.9 907.0,119.6 908.0,120.4 909.0,121.2 910.0,122.2 911.0,123.3 912.0,124.5 913.0,125.8 914.0,127.2 915.0,128.7 916.0,130.3 917.0,132.0 918.0,133.8 919.0,135.6 920.0,137.5 921.0,139.5 922.0,141.5 923.0,143.6 924.0,145.8 925.0,148.0 926.0,150.3 927.0,152.7 928.0,155.1 929.0,157.6 930.0,160.1 931.0,162.7 932.0,165.4 933.0,168.1 934.0,170.9 935.0,173.7 936.0,176.6 937.0,179.6 938.0,182.6 939.0,185.6 940.0,188.7 941.0,191.9 942.0,195.1 943.0,198.4 944.0,201.7 945.0,205.1 946.0,208.5 947.0,211.9 948.0,215.4 949.0,218.9 950.0,222.5 951.0,226.1 952.0,229.8 953.0,233.5 954.0,237.2 955.0,241.0 956.0,244.8 957.0,248.7 958.0,252.6 959.0,256.5 960.0,260.4 961.0,264.4 962.0,268.4 963.0,272.4 964.0,276.4 965.0,280.5 966.0,284.6 967.0,288.7 968.0,292.9 969.0,297.0 970.0,301.2 971.0,305.4 972.0,309.6 973.0,313.8 974.0,318.1 975.0,322.3 976.0,326.6 977.0,330.8 978.0,335.1 979.0,339.4 980.0,343.7 981.0,347.9 982.0,352.2 983.0,356.5" fill="none" stroke="#78c850" stroke-width="1.2"/>
<text x="60.5" y="117.1" fill="#f08a3c" font-family="Liberation Sans" font-size="13" text-anchor="end" style="white-space:pre" xml:space="preserve">2.5</text>
<text x="88.5" y="117.1" fill="#50c050" font-family="Liberation Sans" font-size="13" text-anchor="end" style="white-space:pre" xml:space="preserve">2.5</text>
<text x="986" y="117.1" fill="#58c0d8" font-family="Liberation Sans" font-size="13" text-anchor="start" style="white-space:pre" xml:space="preserve">10.0</text>
<text x="60.5" y="165.6" fill="#f08a3c" font-family="Liberation Sans" font-size="13" text-anchor="end" style="white-space:pre" xml:space="preserve">2.0</text>
<text x="88.5" y="165.6" fill="#50c050" font-family="Liberation Sans" font-size="13" text-anchor="end" style="white-space:pre" xml:space="preserve">2.0</text>
<text x="986" y="165.6" fill="#58c0d8" font-family="Liberation Sans" font-size="13" text-anchor="start" style="white-space:pre" xml:space="preserve">8.0</text>
<text x="60.5" y="214.1" fill="#f08a3c" font-family="Liberation Sans" font-size="13" text-anchor="end" style="white-space:pre" xml:space="preserve">1.5</text>
<text x="88.5" y="214.1" fill="#50c050" font-family="Liberation Sans" font-size="13" text-anchor="end" style="white-space:pre" xml:space="preserve">1.5</text>
<text x="986" y="214.1" fill="#58c0d8" font-family="Liberation Sans" font-size="13" text-anchor="start" style="white-space:pre" xml:space="preserve">6.0</text>
<text x="60.5" y="262.59999999999997" fill="#f08a3c" font-family="Liberation Sans" font-size="13" text-anchor="end" style="white-space:pre" xml:space="preserve">1.0</text>
<text x="88.5" y="262.59999999999997" fill="#50c050" font-family="Liberation Sans" font-size="13" text-anchor="end" style="white-space:pre" xml:space="preserve">1.0</text>
<text x="986" y="262.59999999999997" fill="#58c0d8" font-family="Liberation Sans" font-size="13" text-anchor="start" style="white-space:pre" xml:space="preserve">4.0</text>
<text x="60.5" y="311.09999999999997" fill="#f08a3c" font-family="Liberation Sans" font-size="13" text-anchor="end" style="white-space:pre" xml:space="preserve">0.5</text>
<text x="88.5" y="311.09999999999997" fill="#50c050" font-family="Liberation Sans" font-size="13" text-anchor="end" style="white-space:pre" xml:space="preserve">0.5</text>
<text x="986" y="311.09999999999997" fill="#58c0d8" font-family="Liberation Sans" font-size="13" text-anchor="start" style="white-space:pre" xml:space="preserve">2.0</text>
<text x="60.5" y="359.59999999999997" fill="#f08a3c" font-family="Liberation Sans" font-size="13" text-anchor="end" style="white-space:pre" xml:space="preserve">0.0</text>
<text x="88.5" y="359.59999999999997" fill="#50c050" font-family="Liberation Sans" font-size="13" text-anchor="end" style="white-space:pre" xml:space="preserve">0.0</text>
<text x="986" y="359.59999999999997" fill="#58c0d8" font-family="Liberation Sans" font-size="13" text-anchor="start" style="white-space:pre" xml:space="preserve">0.0</text>
<text x="60.5" y="408.09999999999997" fill="#f08a3c" font-family="Liberation Sans" font-size="13" text-anchor="end" style="white-space:pre" xml:space="preserve">-0.5</text>
<text x="88.5" y="408.09999999999997" fill="#50c050" font-family="Liberation Sans" font-size="13" text-anchor="end" style="white-space:pre" xml:space="preserve">-0.5</text>
<text x="986" y="408.09999999999997" fill="#58c0d8" font-family="Liberation Sans" font-size="13" text-anchor="start" style="white-space:pre" xml:space="preserve">-2.0</text>
<text x="60.5" y="456.59999999999997" fill="#f08a3c" font-family="Liberation Sans" font-size="13" text-anchor="end" style="white-space:pre" xml:space="preserve">-1.0</text>
<text x="88.5" y="456.59999999999997" fill="#50c050" font-family="Liberation Sans" font-size="13" text-anchor="end" style="white-space:pre" xml:space="preserve">-1.0</text>
<text x="986" y="456.59999999999997" fill="#58c0d8" font-family="Liberation Sans" font-size="13" text-anchor="start" style="white-space:pre" xml:space="preserve">-4.0</text>
<text x="60.5" y="505.09999999999997" fill="#f08a3c" font-family="Liberation Sans" font-size="13" text-anchor="end" style="white-space:pre" xml:space="preserve">-1.5</text>
<text x="88.5" y="505.09999999999997" fill="#50c050" font-family="Liberation Sans" font-size="13" text-anchor="end" style="white-space:pre" xml:space="preserve">-1.5</text>
<text x="986" y="505.09999999999997" fill="#58c0d8" font-family="Liberation Sans" font-size="13" text-anchor="start" style="white-space:pre" xml:space="preserve">-6.0</text>
<text x="60.5" y="553.5999999999999" fill="#f08a3c" font-family="Liberation Sans" font-size="13" text-anchor="end" style="white-space:pre" xml:space="preserve">-2.0</text>
<text x="88.5" y="553.5999999999999" fill="#50c050" font-family="Liberation Sans" font-size="13" text-anchor="end" style="white-space:pre" xml:space="preserve">-2.0</text>
<text x="986" y="553.5999999999999" fill="#58c0d8" font-family="Liberation Sans" font-size="13" text-anchor="start" style="white-space:pre" xml:space="preserve">-8.0</text>
<text x="60.5" y="602.0999999999999" fill="#f08a3c" font-family="Liberation Sans" font-size="13" text-anchor="end" style="white-space:pre" xml:space="preserve">-2.5</text>
<text x="88.5" y="602.0999999999999" fill="#50c050" font-family="Liberation Sans" font-size="13" text-anchor="end" style="white-space:pre" xml:space="preserve">-2.5</text>
<text x="986" y="602.0999999999999" fill="#58c0d8" font-family="Liberation Sans" font-size="13" text-anchor="start" style="white-space:pre" xml:space="preserve">-10.0</text>
<text x="92.0" y="614.5" fill="#a8a8a8" font-family="Liberation Sans" font-size="13" text-anchor="middle" style="white-space:pre" xml:space="preserve">20000 uS</text>
<text x="181.2" y="614.5" fill="#a8a8a8" font-family="Liberation Sans" font-size="13" text-anchor="middle" style="white-space:pre" xml:space="preserve">20500 uS</text>
<text x="270.3" y="614.5" fill="#a8a8a8" font-family="Liberation Sans" font-size="13" text-anchor="middle" style="white-space:pre" xml:space="preserve">21000 uS</text>
<text x="359.5" y="614.5" fill="#a8a8a8" font-family="Liberation Sans" font-size="13" text-anchor="middle" style="white-space:pre" xml:space="preserve">21500 uS</text>
<text x="448.6" y="614.5" fill="#a8a8a8" font-family="Liberation Sans" font-size="13" text-anchor="middle" style="white-space:pre" xml:space="preserve">22000 uS</text>
<text x="537.8" y="614.5" fill="#a8a8a8" font-family="Liberation Sans" font-size="13" text-anchor="middle" style="white-space:pre" xml:space="preserve">22500 uS</text>
<text x="627.0" y="614.5" fill="#a8a8a8" font-family="Liberation Sans" font-size="13" text-anchor="middle" style="white-space:pre" xml:space="preserve">23000 uS</text>
<text x="716.1" y="614.5" fill="#a8a8a8" font-family="Liberation Sans" font-size="13" text-anchor="middle" style="white-space:pre" xml:space="preserve">23500 uS</text>
<text x="805.3" y="614.5" fill="#a8a8a8" font-family="Liberation Sans" font-size="13" text-anchor="middle" style="white-space:pre" xml:space="preserve">24000 uS</text>
<text x="894.4" y="614.5" fill="#a8a8a8" font-family="Liberation Sans" font-size="13" text-anchor="middle" style="white-space:pre" xml:space="preserve">24500 uS</text>
<text x="983.6" y="614.5" fill="#a8a8a8" font-family="Liberation Sans" font-size="13" text-anchor="middle" style="white-space:pre" xml:space="preserve">25000 uS</text>
<text x="91.4" y="102" fill="#f0f0f0" font-family="Liberation Sans" font-size="13" text-anchor="start" style="white-space:pre" xml:space="preserve" textLength="343.6" lengthAdjust="spacingAndGlyphs">Device ID 03930313830313 Sample rate: 100000 Stopped</text>
<text x="98" y="133" fill="#50c050" font-family="Liberation Sans" font-size="13" text-anchor="start" style="white-space:pre" xml:space="preserve" textLength="138.8" lengthAdjust="spacingAndGlyphs">1  21.80  mS,  -0.013  V</text>
<text x="98" y="145" fill="#50c050" font-family="Liberation Sans" font-size="13" text-anchor="start" style="white-space:pre" xml:space="preserve" textLength="300.8" lengthAdjust="spacingAndGlyphs">2  22.28  mS,  -0.013  V Delta  0.483  mS,  0.000  V</text>
<text x="91" y="629" fill="#f0f0f0" font-family="Liberation Sans" font-size="13" text-anchor="start" style="white-space:pre" xml:space="preserve" textLength="737.7" lengthAdjust="spacingAndGlyphs">500 uS/div  View at 20.0 mS  CA Period =  2.00  mS  CA Freq =  500.0  Hz  CA-B Phase =  26.0  deg  CB-A Delay =  0.28  mS</text>
<text x="91" y="643.5" fill="#f0f0f0" font-family="Liberation Sans" font-size="13" text-anchor="start" style="white-space:pre" xml:space="preserve" textLength="359.7" lengthAdjust="spacingAndGlyphs">CHA: 0.5 V/div P-PV =  4.9831 CHA: 2.0 mA/div P-PI =  8.35</text>
<text x="91" y="657.5" fill="#f0f0f0" font-family="Liberation Sans" font-size="13" text-anchor="start" style="white-space:pre" xml:space="preserve" textLength="181" lengthAdjust="spacingAndGlyphs">CHB: 0.5 V/div P-PV =  2.9847</text>
<text x="414.5" y="360" fill="#f0f0f0" font-family="Liberation Sans" font-size="13" text-anchor="middle" style="white-space:pre" xml:space="preserve">X1</text>
<text x="501.5" y="360" fill="#f0f0f0" font-family="Liberation Sans" font-size="13" text-anchor="middle" style="white-space:pre" xml:space="preserve">X2</text>
</svg>
</body></html>
